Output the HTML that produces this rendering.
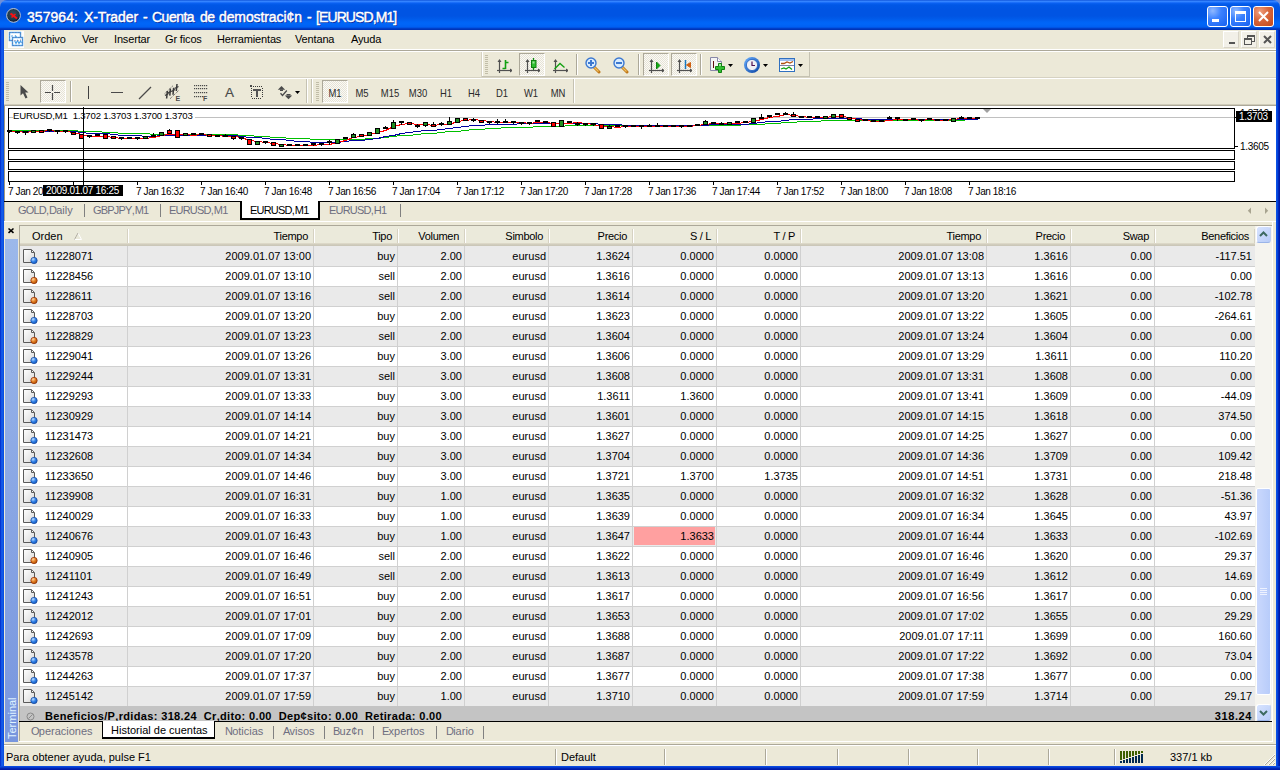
<!DOCTYPE html><html><head><meta charset="utf-8"><style>
*{margin:0;padding:0;box-sizing:border-box}
html,body{width:1280px;height:770px;overflow:hidden}
body{position:relative;background:#ECE9D8;font-family:"Liberation Sans",sans-serif;font-size:11px;color:#000}
.a{position:absolute}
.t{position:absolute;white-space:nowrap;line-height:13px}
.c{letter-spacing:-0.8px}
</style></head><body><div class="a" style="left:0;top:0;width:1280px;height:10px;background:#6F8FD8"></div><div class="a" style="left:0px;top:0px;width:1280px;height:30px;background:linear-gradient(to bottom,#0040D0 0px,#3A8CFF 1px,#2C7BFF 2px,#0A62F2 3px,#0057E6 5px,#0054E3 10px,#0054E3 16px,#005BEA 19px,#0064F6 22px,#0066F8 24px,#005FF2 27px,#004AD8 28px,#0034B8 29px,#0034B8 30px);border-radius:7px 7px 0 0"></div><div class="a" style="left:0px;top:30px;width:4px;height:740px;background:linear-gradient(to right,#0026C8,#0B44DC 1px,#1A66F0 2px,#0A4FE0 3px)"></div><div class="a" style="left:1276px;top:30px;width:4px;height:740px;background:linear-gradient(to right,#0A4FE0,#0A50E6 1px,#0039D0 2px,#001AA8 3px)"></div><div class="a" style="left:0px;top:766px;width:1280px;height:4px;background:linear-gradient(to bottom,#0A50E6,#0843DA 1px,#0030C0 2px,#001AA8 3px)"></div><svg class="a" style="left:6px;top:8px" width="15" height="15" viewBox="0 0 15 15">
<defs><radialGradient id="ic" cx="0.45" cy="0.4" r="0.6"><stop offset="0" stop-color="#3C5060"/><stop offset="0.7" stop-color="#1E3848"/><stop offset="1" stop-color="#0A1030"/></radialGradient></defs>
<circle cx="7.5" cy="7.4" r="6.9" fill="url(#ic)" stroke="#B8C4D8" stroke-width="1"/>
<path d="M4.5 5.5 L11 10.5" stroke="#FF1010" stroke-width="2"/><path d="M5.5 9.5 L9.5 6" stroke="#FF1010" stroke-width="1.5"/></svg><div class="t" style="left:27px;top:9px;font-size:14px;line-height:16px;color:#fff;-webkit-text-stroke:0.45px #fff;text-shadow:1px 1px 0 #0A2A9C;letter-spacing:0.05px">357964:</div><div class="t" style="left:84px;top:9px;font-size:14px;line-height:16px;color:#fff;-webkit-text-stroke:0.45px #fff;text-shadow:1px 1px 0 #0A2A9C;letter-spacing:-0.08px">X-Trader</div><div class="t" style="left:143px;top:9px;font-size:14px;line-height:16px;color:#fff;-webkit-text-stroke:0.45px #fff;text-shadow:1px 1px 0 #0A2A9C;letter-spacing:0px">-</div><div class="t" style="left:152px;top:9px;font-size:14px;line-height:16px;color:#fff;-webkit-text-stroke:0.45px #fff;text-shadow:1px 1px 0 #0A2A9C;letter-spacing:-0.5px">Cuenta</div><div class="t" style="left:200px;top:9px;font-size:14px;line-height:16px;color:#fff;-webkit-text-stroke:0.45px #fff;text-shadow:1px 1px 0 #0A2A9C;letter-spacing:-0.6px">de</div><div class="t" style="left:219px;top:9px;font-size:14px;line-height:16px;color:#fff;-webkit-text-stroke:0.45px #fff;text-shadow:1px 1px 0 #0A2A9C;letter-spacing:-0.1px">demostraci¢n</div><div class="t" style="left:307px;top:9px;font-size:14px;line-height:16px;color:#fff;-webkit-text-stroke:0.45px #fff;text-shadow:1px 1px 0 #0A2A9C;letter-spacing:0px">-</div><div class="t" style="left:316px;top:9px;font-size:14px;line-height:16px;color:#fff;-webkit-text-stroke:0.45px #fff;text-shadow:1px 1px 0 #0A2A9C;letter-spacing:-0.9px">[EURUSD,M1]</div><div class="a" style="left:1207px;top:6px;width:21px;height:21px;background:radial-gradient(circle at 25% 20%,#8FB8FF 0,#3C82FF 40%,#1660F0 100%);border:1px solid #fff;border-radius:3px"><div class="a" style="left:4px;top:12px;width:7px;height:3px;background:#fff"></div></div><div class="a" style="left:1230px;top:6px;width:21px;height:21px;background:radial-gradient(circle at 25% 20%,#8FB8FF 0,#3C82FF 40%,#1660F0 100%);border:1px solid #fff;border-radius:3px"><div class="a" style="left:4px;top:4px;width:11px;height:11px;border:1px solid #fff;border-top-width:3px"></div></div><div class="a" style="left:1253px;top:6px;width:21px;height:21px;background:radial-gradient(circle at 30% 25%,#F0A080 0,#D8663C 45%,#C24818 100%);border:1px solid #fff;border-radius:3px"><svg width="21" height="21" style="position:absolute;left:-1px;top:-1px"><path d="M6 6 L15 15 M15 6 L6 15" stroke="#fff" stroke-width="2"/></svg></div><svg class="a" style="left:8px;top:31px" width="16" height="17" viewBox="0 0 16 17">
<rect x="0" y="0" width="16" height="17" fill="#FCFCFC"/>
<rect x="1.5" y="1.5" width="11" height="8" fill="#fff" stroke="#48A0E8" stroke-width="1.4"/>
<path d="M3.5 5.5 L4.5 4.5 M7 4.5 L8.5 6" stroke="#48A0E8" stroke-width="1.2"/>
<rect x="4.5" y="6.5" width="10" height="8" fill="#fff" stroke="#48A0E8" stroke-width="1.4"/>
<path d="M6.5 9.5 L8 12.5 L9.5 9.5 L11 12.5 L12.5 10 L13.5 12" stroke="#48A0E8" stroke-width="1.1" fill="none"/>
<path d="M1.5 1.5 H12.5 V9.5 H1.5 Z M4.5 6.5 H14.5 V14.5 H4.5 Z" fill="none" stroke="#805070" stroke-width="1" stroke-dasharray="0.8 2.2" opacity="0.7"/></svg><div class="t" style="left:30px;top:33px;letter-spacing:-0.15px">Archivo</div><div class="t" style="left:82px;top:33px;letter-spacing:-0.15px">Ver</div><div class="t" style="left:114px;top:33px;letter-spacing:-0.15px">Insertar</div><div class="t" style="left:165px;top:33px;letter-spacing:-0.15px">Gr ficos</div><div class="t" style="left:217px;top:33px;letter-spacing:-0.15px">Herramientas</div><div class="t" style="left:295px;top:33px;letter-spacing:-0.15px">Ventana</div><div class="t" style="left:351px;top:33px;letter-spacing:-0.15px">Ayuda</div><div class="a" style="left:1223px;top:31px;width:16px;height:17px;background:#F2F0E8;border:1px solid #fff;border-right-color:#D8D4C8;border-bottom-color:#D8D4C8"><div class="a" style="left:5px;top:10px;width:6px;height:2px;background:#555"></div></div><div class="a" style="left:1241px;top:31px;width:16px;height:17px;background:#F2F0E8;border:1px solid #fff;border-right-color:#D8D4C8;border-bottom-color:#D8D4C8"><div class="a" style="left:5px;top:3px;width:8px;height:7px;border:1px solid #555;border-top-width:2px"></div><div class="a" style="left:2px;top:6px;width:8px;height:7px;border:1px solid #555;border-top-width:2px;background:#F2F0E8"></div></div><div class="a" style="left:1259px;top:31px;width:16px;height:17px;background:#F2F0E8;border:1px solid #fff;border-right-color:#D8D4C8;border-bottom-color:#D8D4C8"><svg width="16" height="17" style="position:absolute;left:0;top:0"><path d="M4 4 L11 11 M11 4 L4 11" stroke="#555" stroke-width="2"/></svg></div><div class="a" style="left:4px;top:49px;width:1272px;height:1px;background:#fff"></div><div class="a" style="left:4px;top:50px;width:1272px;height:1px;background:#ACA899"></div><div class="a" style="left:4px;top:51px;width:1272px;height:1px;background:#fff"></div><div class="a" style="left:4px;top:77px;width:1272px;height:1px;background:#D6D2C2"></div><div class="a" style="left:4px;top:78px;width:1272px;height:1px;background:#fff"></div><div class="a" style="left:4px;top:104px;width:1272px;height:1px;background:#D0CCBA"></div><div class="a" style="left:4px;top:105px;width:1272px;height:1px;background:#ACA899"></div><div class="a" style="left:481px;top:52px;width:1px;height:25px;background:#D6D2C2"></div><div class="a" style="left:482px;top:52px;width:1px;height:25px;background:#fff"></div><div class="a" style="left:482px;top:76px;width:328px;height:1px;background:#C5C2B2"></div><div class="a" style="left:809px;top:52px;width:1px;height:25px;background:#C5C2B2"></div><div class="a" style="left:485px;top:55px;width:3px;height:1px;background:#C1BDA8"></div><div class="a" style="left:485px;top:57px;width:3px;height:1px;background:#C1BDA8"></div><div class="a" style="left:485px;top:59px;width:3px;height:1px;background:#C1BDA8"></div><div class="a" style="left:485px;top:61px;width:3px;height:1px;background:#C1BDA8"></div><div class="a" style="left:485px;top:63px;width:3px;height:1px;background:#C1BDA8"></div><div class="a" style="left:485px;top:65px;width:3px;height:1px;background:#C1BDA8"></div><div class="a" style="left:485px;top:67px;width:3px;height:1px;background:#C1BDA8"></div><div class="a" style="left:485px;top:69px;width:3px;height:1px;background:#C1BDA8"></div><div class="a" style="left:485px;top:71px;width:3px;height:1px;background:#C1BDA8"></div><div class="a" style="left:485px;top:73px;width:3px;height:1px;background:#C1BDA8"></div><div class="a" style="left:6px;top:82px;width:3px;height:1px;background:#C1BDA8"></div><div class="a" style="left:6px;top:84px;width:3px;height:1px;background:#C1BDA8"></div><div class="a" style="left:6px;top:86px;width:3px;height:1px;background:#C1BDA8"></div><div class="a" style="left:6px;top:88px;width:3px;height:1px;background:#C1BDA8"></div><div class="a" style="left:6px;top:90px;width:3px;height:1px;background:#C1BDA8"></div><div class="a" style="left:6px;top:92px;width:3px;height:1px;background:#C1BDA8"></div><div class="a" style="left:6px;top:94px;width:3px;height:1px;background:#C1BDA8"></div><div class="a" style="left:6px;top:96px;width:3px;height:1px;background:#C1BDA8"></div><div class="a" style="left:6px;top:98px;width:3px;height:1px;background:#C1BDA8"></div><div class="a" style="left:6px;top:100px;width:3px;height:1px;background:#C1BDA8"></div><div class="a" style="left:306px;top:79px;width:1px;height:24px;background:#C5C2B2"></div><div class="a" style="left:307px;top:79px;width:1px;height:24px;background:#fff"></div><div class="a" style="left:311px;top:79px;width:1px;height:24px;background:#C5C2B2"></div><div class="a" style="left:312px;top:79px;width:1px;height:24px;background:#fff"></div><div class="a" style="left:316px;top:82px;width:3px;height:1px;background:#C1BDA8"></div><div class="a" style="left:316px;top:84px;width:3px;height:1px;background:#C1BDA8"></div><div class="a" style="left:316px;top:86px;width:3px;height:1px;background:#C1BDA8"></div><div class="a" style="left:316px;top:88px;width:3px;height:1px;background:#C1BDA8"></div><div class="a" style="left:316px;top:90px;width:3px;height:1px;background:#C1BDA8"></div><div class="a" style="left:316px;top:92px;width:3px;height:1px;background:#C1BDA8"></div><div class="a" style="left:316px;top:94px;width:3px;height:1px;background:#C1BDA8"></div><div class="a" style="left:316px;top:96px;width:3px;height:1px;background:#C1BDA8"></div><div class="a" style="left:316px;top:98px;width:3px;height:1px;background:#C1BDA8"></div><div class="a" style="left:316px;top:100px;width:3px;height:1px;background:#C1BDA8"></div><div class="a" style="left:573px;top:79px;width:1px;height:24px;background:#C5C2B2"></div><div class="a" style="left:574px;top:79px;width:1px;height:24px;background:#fff"></div><div class="a" style="left:70px;top:81px;width:1px;height:21px;background:#ACA899"></div><div class="a" style="left:71px;top:81px;width:1px;height:21px;background:#fff"></div><div class="a" style="left:576px;top:54px;width:1px;height:21px;background:#ACA899"></div><div class="a" style="left:577px;top:54px;width:1px;height:21px;background:#fff"></div><div class="a" style="left:638px;top:54px;width:1px;height:21px;background:#ACA899"></div><div class="a" style="left:639px;top:54px;width:1px;height:21px;background:#fff"></div><div class="a" style="left:700px;top:54px;width:1px;height:21px;background:#ACA899"></div><div class="a" style="left:701px;top:54px;width:1px;height:21px;background:#fff"></div><div class="a" style="left:40px;top:80px;width:26px;height:23px;background:repeating-conic-gradient(#FBFAF6 0 25%,#E6E3D6 0 50%) 0 0/2px 2px;border:1px solid #ACA899;border-right-color:#fff;border-bottom-color:#fff"></div><div class="a" style="left:519px;top:53px;width:26px;height:23px;background:repeating-conic-gradient(#FBFAF6 0 25%,#E6E3D6 0 50%) 0 0/2px 2px;border:1px solid #ACA899;border-right-color:#fff;border-bottom-color:#fff"></div><div class="a" style="left:643px;top:53px;width:26px;height:23px;background:repeating-conic-gradient(#FBFAF6 0 25%,#E6E3D6 0 50%) 0 0/2px 2px;border:1px solid #ACA899;border-right-color:#fff;border-bottom-color:#fff"></div><div class="a" style="left:671px;top:53px;width:26px;height:23px;background:repeating-conic-gradient(#FBFAF6 0 25%,#E6E3D6 0 50%) 0 0/2px 2px;border:1px solid #ACA899;border-right-color:#fff;border-bottom-color:#fff"></div><div class="a" style="left:322px;top:80px;width:26px;height:23px;background:repeating-conic-gradient(#FBFAF6 0 25%,#E6E3D6 0 50%) 0 0/2px 2px;border:1px solid #ACA899;border-right-color:#fff;border-bottom-color:#fff"></div><svg class="a" style="left:19px;top:84px" width="11" height="16" viewBox="0 0 11 16" ><path d="M1.5 1 L1.5 11.5 L4 9.2 L6.5 14.5 L8.5 13.5 L6.2 8.5 L9.5 8.5 Z" fill="#4A4A4A"/></svg><svg class="a" style="left:44px;top:84px" width="18" height="17" viewBox="0 0 18 17" ><path d="M8.5 1 V7 M8.5 9 V16 M1 8.5 H7 M10 8.5 H16" stroke="#4A4A4A" stroke-width="1.2"/></svg><div class="a" style="left:88px;top:86px;width:1px;height:13px;background:#404040"></div><div class="a" style="left:111px;top:91.5px;width:12px;height:1.6px;background:#4A4A4A"></div><svg class="a" style="left:138px;top:86px" width="14" height="14" viewBox="0 0 14 14" ><path d="M1 13 L13 1" stroke="#4A4A4A" stroke-width="1.3"/></svg><svg class="a" style="left:164px;top:83px" width="18" height="19" viewBox="0 0 18 19" ><path d="M0.7 10.6 L8.7 3" stroke="#4A4A4A" stroke-width="1" stroke-dasharray="1 1"/><path d="M6 15.8 L15 7.2" stroke="#4A4A4A" stroke-width="1" stroke-dasharray="1 1"/><path d="M3.4 8 L2.6 15.5 M6.4 5.6 L5.8 12.6 M9.6 4.8 L9 11.8 M13 1 L12.3 8" stroke="#3A3A3A" stroke-width="1.5"/><path d="M1 12.5 L4.5 10.5 M4 10 L7.5 8 M7.5 8.5 L11 6.5 M10.5 5.5 L14.5 3.5" stroke="#3A3A3A" stroke-width="1.2"/><text x="11.5" y="18" font-family="Liberation Sans" font-weight="bold" font-size="7" fill="#4A4A4A">E</text></svg><svg class="a" style="left:194px;top:84px" width="16" height="19" viewBox="0 0 16 19" ><rect x="0" y="1" width="1.2" height="1.2" fill="#4A4A4A"/><rect x="2" y="1" width="1.2" height="1.2" fill="#4A4A4A"/><rect x="4" y="1" width="1.2" height="1.2" fill="#4A4A4A"/><rect x="6" y="1" width="1.2" height="1.2" fill="#4A4A4A"/><rect x="8" y="1" width="1.2" height="1.2" fill="#4A4A4A"/><rect x="10" y="1" width="1.2" height="1.2" fill="#4A4A4A"/><rect x="12" y="1" width="1.2" height="1.2" fill="#4A4A4A"/><rect x="0" y="4" width="1.2" height="1.2" fill="#4A4A4A"/><rect x="2" y="4" width="1.2" height="1.2" fill="#4A4A4A"/><rect x="4" y="4" width="1.2" height="1.2" fill="#4A4A4A"/><rect x="6" y="4" width="1.2" height="1.2" fill="#4A4A4A"/><rect x="8" y="4" width="1.2" height="1.2" fill="#4A4A4A"/><rect x="10" y="4" width="1.2" height="1.2" fill="#4A4A4A"/><rect x="12" y="4" width="1.2" height="1.2" fill="#4A4A4A"/><rect x="0" y="8" width="1.2" height="1.2" fill="#4A4A4A"/><rect x="2" y="8" width="1.2" height="1.2" fill="#4A4A4A"/><rect x="4" y="8" width="1.2" height="1.2" fill="#4A4A4A"/><rect x="6" y="8" width="1.2" height="1.2" fill="#4A4A4A"/><rect x="8" y="8" width="1.2" height="1.2" fill="#4A4A4A"/><rect x="10" y="8" width="1.2" height="1.2" fill="#4A4A4A"/><rect x="12" y="8" width="1.2" height="1.2" fill="#4A4A4A"/><rect x="0" y="12" width="1.2" height="1.2" fill="#4A4A4A"/><rect x="2" y="12" width="1.2" height="1.2" fill="#4A4A4A"/><rect x="4" y="12" width="1.2" height="1.2" fill="#4A4A4A"/><rect x="6" y="12" width="1.2" height="1.2" fill="#4A4A4A"/><rect x="8" y="12" width="1.2" height="1.2" fill="#4A4A4A"/><text x="9" y="17" font-family="Liberation Sans" font-weight="bold" font-size="7" fill="#4A4A4A">F</text></svg><div class="t" style="left:225px;top:86px;font-size:13.5px;color:#4A4A4A;-webkit-text-stroke:0.15px #4A4A4A">A</div><svg class="a" style="left:250px;top:85px" width="14" height="15" viewBox="0 0 14 15" shape-rendering="crispEdges"><rect x="0" y="0" width="2" height="2" fill="#4A4A4A"/><rect x="3" y="1" width="1" height="1" fill="#3A3A3A"/><rect x="2" y="13" width="1" height="1" fill="#3A3A3A"/><rect x="5" y="1" width="1" height="1" fill="#3A3A3A"/><rect x="4" y="13" width="1" height="1" fill="#3A3A3A"/><rect x="7" y="1" width="1" height="1" fill="#3A3A3A"/><rect x="6" y="13" width="1" height="1" fill="#3A3A3A"/><rect x="9" y="1" width="1" height="1" fill="#3A3A3A"/><rect x="8" y="13" width="1" height="1" fill="#3A3A3A"/><rect x="11" y="1" width="1" height="1" fill="#3A3A3A"/><rect x="10" y="13" width="1" height="1" fill="#3A3A3A"/><rect x="1" y="3" width="1" height="1" fill="#3A3A3A"/><rect x="12" y="3" width="1" height="1" fill="#3A3A3A"/><rect x="1" y="5" width="1" height="1" fill="#3A3A3A"/><rect x="12" y="5" width="1" height="1" fill="#3A3A3A"/><rect x="1" y="7" width="1" height="1" fill="#3A3A3A"/><rect x="12" y="7" width="1" height="1" fill="#3A3A3A"/><rect x="1" y="9" width="1" height="1" fill="#3A3A3A"/><rect x="12" y="9" width="1" height="1" fill="#3A3A3A"/><rect x="1" y="11" width="1" height="1" fill="#3A3A3A"/><rect x="12" y="11" width="1" height="1" fill="#3A3A3A"/><rect x="3" y="4" width="8" height="1.5" fill="#555"/><rect x="6.2" y="4" width="1.7" height="8" fill="#555"/></svg><svg class="a" style="left:277px;top:85px" width="24" height="15" viewBox="0 0 24 15" ><path d="M0.8 4.8 L4.5 1 L8.2 4.8 Z" fill="#4A4A4A"/><rect x="3" y="4.5" width="3" height="1.5" fill="#4A4A4A"/><path d="M3.5 8.3 L5.5 10.5 L9.8 5.5" stroke="#4A4A4A" stroke-width="1.3" fill="none"/><rect x="9.5" y="9" width="4" height="1.5" fill="#4A4A4A"/><path d="M7.8 10.5 L15.2 10.5 L11.5 14.2 Z" fill="#4A4A4A"/><path d="M18 6 H23 L20.5 9 Z" fill="#000"/></svg><div class="t" style="left:314.5px;width:40px;text-align:center;top:87px;font-size:11px;color:#2A2A2A;transform:scaleX(0.86)">M1</div><div class="t" style="left:341.7px;width:40px;text-align:center;top:87px;font-size:11px;color:#2A2A2A;transform:scaleX(0.86)">M5</div><div class="t" style="left:370.4px;width:40px;text-align:center;top:87px;font-size:11px;color:#2A2A2A;transform:scaleX(0.86)">M15</div><div class="t" style="left:398.3px;width:40px;text-align:center;top:87px;font-size:11px;color:#2A2A2A;transform:scaleX(0.86)">M30</div><div class="t" style="left:426.4px;width:40px;text-align:center;top:87px;font-size:11px;color:#2A2A2A;transform:scaleX(0.86)">H1</div><div class="t" style="left:453.7px;width:40px;text-align:center;top:87px;font-size:11px;color:#2A2A2A;transform:scaleX(0.86)">H4</div><div class="t" style="left:482.4px;width:40px;text-align:center;top:87px;font-size:11px;color:#2A2A2A;transform:scaleX(0.86)">D1</div><div class="t" style="left:511.4px;width:40px;text-align:center;top:87px;font-size:11px;color:#2A2A2A;transform:scaleX(0.86)">W1</div><div class="t" style="left:537.9px;width:40px;text-align:center;top:87px;font-size:11px;color:#2A2A2A;transform:scaleX(0.86)">MN</div><svg class="a" style="left:494px;top:57px" width="18" height="17" viewBox="0 0 18 17" ><path d="M5.5 3 V16" stroke="#505050" stroke-width="1.2"/><path d="M3 13.5 H17" stroke="#505050" stroke-width="1.2"/><path d="M3.5 5 L5.5 2 L7.5 5 Z" fill="#505050"/><path d="M16 11.5 L19 13.5 L16 15.5 Z" fill="#505050"/><path d="M11.5 3 V12 M11.5 5.5 H14.5 M8.5 11.5 H11.5" stroke="#10A010" stroke-width="1.6" fill="none"/></svg><svg class="a" style="left:522px;top:55px" width="18" height="19" viewBox="0 0 18 19" ><path d="M5.5 5 V18" stroke="#505050" stroke-width="1.2"/><path d="M3 15.5 H17" stroke="#505050" stroke-width="1.2"/><path d="M3.5 7 L5.5 4 L7.5 7 Z" fill="#505050"/><path d="M16 13.5 L19 15.5 L16 17.5 Z" fill="#505050"/><path d="M11.5 3 V15" stroke="#109010" stroke-width="1.3"/><rect x="9.5" y="5.5" width="4.5" height="7" fill="#30C030" stroke="#108010"/><rect x="10.5" y="6.5" width="2" height="2" fill="#A0E0A0"/></svg><svg class="a" style="left:550px;top:57px" width="18" height="17" viewBox="0 0 18 17" ><path d="M5.5 3 V16" stroke="#505050" stroke-width="1.2"/><path d="M3 13.5 H17" stroke="#505050" stroke-width="1.2"/><path d="M3.5 5 L5.5 2 L7.5 5 Z" fill="#505050"/><path d="M16 11.5 L19 13.5 L16 15.5 Z" fill="#505050"/><path d="M4.5 12 L10 6.5 L14.5 10.5" stroke="#10A010" stroke-width="1.3" fill="none"/></svg><div class="a" style="left:576px;top:55px;width:1px;height:19px;background:#ACA899"></div><div class="a" style="left:577px;top:55px;width:1px;height:19px;background:#fff"></div><svg class="a" style="left:585px;top:57px" width="16" height="17" viewBox="0 0 16 17" ><path d="M8 9 L14 15" stroke="#C07818" stroke-width="3" stroke-linecap="round"/><path d="M8.5 9.5 L13.5 14.5" stroke="#F0C060" stroke-width="1.2"/><circle cx="6" cy="6" r="5" fill="#D8ECFF" stroke="#3C78D0" stroke-width="1.4"/><path d="M3 6 H9 M6 3 V9" stroke="#3C78D0" stroke-width="2"/></svg><svg class="a" style="left:613px;top:57px" width="16" height="17" viewBox="0 0 16 17" ><path d="M8 9 L14 15" stroke="#C07818" stroke-width="3" stroke-linecap="round"/><path d="M8.5 9.5 L13.5 14.5" stroke="#F0C060" stroke-width="1.2"/><circle cx="6" cy="6" r="5" fill="#D8ECFF" stroke="#3C78D0" stroke-width="1.4"/><path d="M3 6 H9" stroke="#3C78D0" stroke-width="2"/></svg><div class="a" style="left:638px;top:55px;width:1px;height:19px;background:#ACA899"></div><div class="a" style="left:639px;top:55px;width:1px;height:19px;background:#fff"></div><svg class="a" style="left:646px;top:57px" width="18" height="17" viewBox="0 0 18 17" ><path d="M5.5 3 V16" stroke="#505050" stroke-width="1.2"/><path d="M3 13.5 H17" stroke="#505050" stroke-width="1.2"/><path d="M3.5 5 L5.5 2 L7.5 5 Z" fill="#505050"/><path d="M16 11.5 L19 13.5 L16 15.5 Z" fill="#505050"/><path d="M10.5 5 L14 8.5 L10.5 12 Z" fill="#10B010" stroke="#108010"/></svg><svg class="a" style="left:674px;top:57px" width="18" height="17" viewBox="0 0 18 17" ><path d="M5.5 3 V16" stroke="#505050" stroke-width="1.2"/><path d="M3 13.5 H17" stroke="#505050" stroke-width="1.2"/><path d="M3.5 5 L5.5 2 L7.5 5 Z" fill="#505050"/><path d="M16 11.5 L19 13.5 L16 15.5 Z" fill="#505050"/><path d="M11.5 3 V12" stroke="#1878C0" stroke-width="1.5"/><path d="M12.5 8 L16.5 5.5 V10.5 Z M14 7.5 H17" fill="#D06010" stroke="#D06010"/></svg><div class="a" style="left:700px;top:55px;width:1px;height:19px;background:#ACA899"></div><div class="a" style="left:701px;top:55px;width:1px;height:19px;background:#fff"></div><svg class="a" style="left:709px;top:56px" width="26" height="21" viewBox="0 0 26 21" ><path d="M1.5 1.5 H8.5 L12.5 5.5 V14.5 H1.5 Z" fill="#F4F4F4" stroke="#8888A8"/><path d="M8.5 1.5 V5.5 H12.5" fill="#fff" stroke="#8888A8"/><path d="M4.5 5 V12" stroke="#601010"/><path d="M9.5 7.5 H12.5 V10.5 H15.5 V13.5 H12.5 V16.5 H9.5 V13.5 H6.5 V10.5 H9.5 Z" fill="#30C030" stroke="#108010"/><rect x="10" y="8" width="2" height="2" fill="#A0E8A0"/><path d="M19 8 H24 L21.5 11 Z" fill="#000"/></svg><svg class="a" style="left:743px;top:56px" width="27" height="18" viewBox="0 0 27 18" ><defs><linearGradient id="clk" x1="0" y1="0" x2="1" y2="1"><stop offset="0" stop-color="#6AB0FF"/><stop offset="1" stop-color="#0840A0"/></linearGradient></defs><circle cx="9" cy="9" r="8" fill="url(#clk)"/><circle cx="9" cy="9" r="5.6" fill="#F0F0F4" stroke="#2060C0" stroke-width="0.8"/><path d="M9 5.5 V9.5 H12" stroke="#501050" stroke-width="1.2" fill="none"/><path d="M20 8 H25 L22.5 11 Z" fill="#000"/></svg><svg class="a" style="left:778px;top:57px" width="27" height="16" viewBox="0 0 27 16" ><rect x="1.5" y="1.5" width="15" height="13" fill="#fff" stroke="#3070C0"/><rect x="2" y="2" width="14" height="2" fill="#A0C0F0"/><path d="M2 8.5 H16" stroke="#8080A0"/><path d="M3 6.5 L6 6.5 L9 5 L12 6 L15 4.5" stroke="#B05010" stroke-width="1.3" fill="none"/><path d="M3 12 L6 11 L8 12 L11 10 L14 12.5" stroke="#10A010" stroke-width="1.3" fill="none"/><path d="M20 7 H25 L22.5 10 Z" fill="#000"/></svg><div class="a" style="left:4px;top:106px;width:1272px;height:95px;background:#fff;border-left:1px solid #A09A80"></div><div class="a" style="left:4px;top:201px;width:1272px;height:1px;background:#000"></div><svg class="a" style="left:0;top:0" width="1280" height="202" shape-rendering="crispEdges"><rect x="9" y="117" width="1225" height="1" fill="#C0C0C0"/><rect x="8.5" y="108.5" width="1226" height="40" fill="none" stroke="#000"/><rect x="8.5" y="150.5" width="1226" height="9" fill="none" stroke="#000"/><rect x="8.5" y="161.5" width="1226" height="8" fill="none" stroke="#000"/><rect x="8.5" y="171.5" width="1226" height="10" fill="none" stroke="#000"/><polyline points="9.5,130.5 17.5,130.5 25.5,130.5 33.5,130.5 41.5,130.5 49.5,130.5 57.5,130.5 65.5,130.5 73.5,130.5 81.5,131.5 89.5,131.5 97.5,131.5 105.5,132.5 113.5,132.5 121.5,133.5 129.5,133.5 137.5,133.5 145.5,133.5 153.5,134.5 161.5,134.5 169.5,134.5 177.5,134.5 185.5,134.5 193.5,134.5 201.5,134.5 209.5,134.5 217.5,134.5 225.5,134.5 233.5,134.5 241.5,135.5 249.5,135.5 257.5,136.5 265.5,136.5 273.5,137.5 281.5,137.5 289.5,138.5 297.5,138.5 305.5,138.5 313.5,139.5 321.5,139.5 329.5,139.5 337.5,139.5 345.5,139.5 353.5,139.5 361.5,139.5 369.5,138.5 377.5,138.5 385.5,137.5 393.5,136.5 401.5,135.5 409.5,135.5 417.5,134.5 425.5,133.5 433.5,133.5 441.5,132.5 449.5,131.5 457.5,131.5 465.5,130.5 473.5,129.5 481.5,129.5 489.5,128.5 497.5,128.5 505.5,127.5 513.5,127.5 521.5,127.5 529.5,127.5 537.5,126.5 545.5,126.5 553.5,126.5 561.5,126.5 569.5,125.5 577.5,125.5 585.5,125.5 593.5,125.5 601.5,125.5 609.5,125.5 617.5,125.5 625.5,125.5 633.5,125.5 641.5,126.5 649.5,126.5 657.5,126.5 665.5,126.5 673.5,126.5 681.5,126.5 689.5,126.5 697.5,125.5 705.5,125.5 713.5,125.5 721.5,125.5 729.5,125.5 737.5,125.5 745.5,124.5 753.5,124.5 761.5,124.5 769.5,123.5 777.5,123.5 785.5,122.5 793.5,122.5 801.5,121.5 809.5,121.5 817.5,121.5 825.5,120.5 833.5,120.5 841.5,120.5 849.5,120.5 857.5,120.5 865.5,120.5 873.5,120.5 881.5,120.5 889.5,120.5 897.5,120.5 905.5,120.5 913.5,120.5 921.5,120.5 929.5,120.5 937.5,120.5 945.5,120.5 953.5,120.5 961.5,120.5 969.5,119.5 977.5,119.5" fill="none" stroke="#00C000" stroke-width="1" shape-rendering="crispEdges"/><polyline points="9.5,131.5 17.5,131.5 25.5,131.5 33.5,131.5 41.5,131.5 49.5,131.5 57.5,131.5 65.5,131.5 73.5,131.5 81.5,132.5 89.5,133.5 97.5,133.5 105.5,133.5 113.5,134.5 121.5,135.5 129.5,135.5 137.5,135.5 145.5,136.5 153.5,136.5 161.5,135.5 169.5,135.5 177.5,135.5 185.5,135.5 193.5,135.5 201.5,135.5 209.5,135.5 217.5,135.5 225.5,135.5 233.5,135.5 241.5,136.5 249.5,137.5 257.5,137.5 265.5,138.5 273.5,139.5 281.5,139.5 289.5,140.5 297.5,141.5 305.5,141.5 313.5,142.5 321.5,142.5 329.5,142.5 337.5,142.5 345.5,141.5 353.5,140.5 361.5,140.5 369.5,139.5 377.5,138.5 385.5,136.5 393.5,135.5 401.5,133.5 409.5,132.5 417.5,131.5 425.5,130.5 433.5,130.5 441.5,129.5 449.5,128.5 457.5,127.5 465.5,126.5 473.5,125.5 481.5,125.5 489.5,124.5 497.5,124.5 505.5,124.5 513.5,124.5 521.5,123.5 529.5,123.5 537.5,123.5 545.5,123.5 553.5,123.5 561.5,123.5 569.5,123.5 577.5,123.5 585.5,123.5 593.5,123.5 601.5,124.5 609.5,124.5 617.5,124.5 625.5,125.5 633.5,125.5 641.5,125.5 649.5,125.5 657.5,125.5 665.5,125.5 673.5,125.5 681.5,125.5 689.5,125.5 697.5,125.5 705.5,125.5 713.5,124.5 721.5,124.5 729.5,124.5 737.5,124.5 745.5,124.5 753.5,123.5 761.5,122.5 769.5,121.5 777.5,121.5 785.5,120.5 793.5,119.5 801.5,119.5 809.5,119.5 817.5,118.5 825.5,118.5 833.5,118.5 841.5,118.5 849.5,118.5 857.5,118.5 865.5,119.5 873.5,119.5 881.5,119.5 889.5,119.5 897.5,119.5 905.5,119.5 913.5,119.5 921.5,119.5 929.5,119.5 937.5,119.5 945.5,119.5 953.5,119.5 961.5,119.5 969.5,119.5 977.5,119.5" fill="none" stroke="#0000A0" stroke-width="1" shape-rendering="crispEdges"/><polyline points="9.5,131.5 17.5,131.5 25.5,132.5 33.5,131.5 41.5,131.5 49.5,130.5 57.5,131.5 65.5,131.5 73.5,132.5 81.5,134.5 89.5,136.5 97.5,136.5 105.5,136.5 113.5,137.5 121.5,138.5 129.5,138.5 137.5,138.5 145.5,138.5 153.5,137.5 161.5,135.5 169.5,134.5 177.5,134.5 185.5,134.5 193.5,135.5 201.5,134.5 209.5,135.5 217.5,135.5 225.5,136.5 233.5,136.5 241.5,137.5 249.5,140.5 257.5,141.5 265.5,142.5 273.5,143.5 281.5,144.5 289.5,145.5 297.5,145.5 305.5,145.5 313.5,145.5 321.5,144.5 329.5,144.5 337.5,142.5 345.5,140.5 353.5,137.5 361.5,136.5 369.5,134.5 377.5,132.5 385.5,130.5 393.5,126.5 401.5,124.5 409.5,123.5 417.5,124.5 425.5,124.5 433.5,125.5 441.5,124.5 449.5,124.5 457.5,121.5 465.5,120.5 473.5,119.5 481.5,120.5 489.5,121.5 497.5,122.5 505.5,122.5 513.5,122.5 521.5,122.5 529.5,123.5 537.5,122.5 545.5,122.5 553.5,123.5 561.5,123.5 569.5,123.5 577.5,122.5 585.5,123.5 593.5,124.5 601.5,126.5 609.5,126.5 617.5,127.5 625.5,126.5 633.5,126.5 641.5,126.5 649.5,126.5 657.5,126.5 665.5,126.5 673.5,126.5 681.5,126.5 689.5,126.5 697.5,125.5 705.5,124.5 713.5,123.5 721.5,123.5 729.5,123.5 737.5,123.5 745.5,122.5 753.5,121.5 761.5,119.5 769.5,117.5 777.5,116.5 785.5,114.5 793.5,115.5 801.5,116.5 809.5,117.5 817.5,117.5 825.5,117.5 833.5,116.5 841.5,116.5 849.5,117.5 857.5,119.5 865.5,120.5 873.5,121.5 881.5,121.5 889.5,120.5 897.5,119.5 905.5,119.5 913.5,119.5 921.5,120.5 929.5,119.5 937.5,120.5 945.5,120.5 953.5,119.5 961.5,118.5 969.5,118.5 977.5,118.5" fill="none" stroke="#FF0000" stroke-width="1" shape-rendering="crispEdges"/><rect x="9" y="130" width="1" height="1" fill="#000"/><rect x="9" y="131" width="1" height="2" fill="#000"/><rect x="7" y="130" width="5" height="2" fill="#000"/><rect x="17" y="132" width="1" height="2" fill="#000"/><rect x="15" y="131" width="5" height="2" fill="#000"/><rect x="25" y="132" width="1" height="3" fill="#000"/><rect x="23" y="131" width="5" height="2" fill="#000"/><rect x="31.0" y="130.5" width="4" height="2" fill="#209020" stroke="#000"/><rect x="39.0" y="130.5" width="4" height="2" fill="#FF0000" stroke="#000"/><rect x="49" y="129" width="1" height="1" fill="#000"/><rect x="49" y="130" width="1" height="2" fill="#000"/><rect x="47" y="129" width="5" height="2" fill="#000"/><rect x="57" y="131" width="1" height="3" fill="#000"/><rect x="55" y="130" width="5" height="2" fill="#000"/><rect x="65" y="130" width="1" height="1" fill="#000"/><rect x="65" y="131" width="1" height="2" fill="#000"/><rect x="63" y="130" width="5" height="2" fill="#000"/><rect x="71.0" y="132.5" width="4" height="2" fill="#FF0000" stroke="#000"/><rect x="79.0" y="134.5" width="4" height="4" fill="#FF0000" stroke="#000"/><rect x="89" y="135" width="1" height="1" fill="#000"/><rect x="89" y="136" width="1" height="2" fill="#000"/><rect x="87" y="135" width="5" height="2" fill="#000"/><rect x="97" y="134" width="1" height="1" fill="#000"/><rect x="97" y="135" width="1" height="1" fill="#000"/><rect x="95" y="134" width="5" height="2" fill="#000"/><rect x="103.0" y="134.5" width="4" height="4" fill="#FF0000" stroke="#000"/><rect x="111.0" y="136.5" width="4" height="2" fill="#FF0000" stroke="#000"/><rect x="121" y="138" width="1" height="2" fill="#000"/><rect x="119" y="137" width="5" height="2" fill="#000"/><rect x="127" y="137" width="5" height="2" fill="#000"/><rect x="137" y="138" width="1" height="2" fill="#000"/><rect x="135" y="137" width="5" height="2" fill="#000"/><rect x="143.0" y="136.5" width="4" height="2" fill="#209020" stroke="#000"/><rect x="153" y="133" width="1" height="3" fill="#000"/><rect x="151" y="135" width="5" height="2" fill="#000"/><rect x="159.0" y="132.5" width="4" height="3" fill="#209020" stroke="#000"/><rect x="169" y="129" width="1" height="1" fill="#000"/><rect x="167.0" y="130.5" width="4" height="3" fill="#FF0000" stroke="#000"/><rect x="175.0" y="130.5" width="4" height="7" fill="#FF0000" stroke="#000"/><rect x="183.0" y="133.5" width="4" height="2" fill="#209020" stroke="#000"/><rect x="191" y="133" width="5" height="2" fill="#000"/><rect x="199" y="133" width="5" height="2" fill="#000"/><rect x="207.0" y="134.5" width="4" height="2" fill="#FF0000" stroke="#000"/><rect x="215" y="135" width="5" height="2" fill="#000"/><rect x="225" y="134" width="1" height="2" fill="#000"/><rect x="223" y="135" width="5" height="2" fill="#000"/><rect x="233" y="138" width="1" height="2" fill="#000"/><rect x="231.0" y="136.5" width="4" height="2" fill="#FF0000" stroke="#000"/><rect x="241" y="138" width="1" height="2" fill="#000"/><rect x="239" y="137" width="5" height="2" fill="#000"/><rect x="249" y="144" width="1" height="1" fill="#000"/><rect x="247.0" y="139.5" width="4" height="5" fill="#FF0000" stroke="#000"/><rect x="255.0" y="141.5" width="4" height="3" fill="#209020" stroke="#000"/><rect x="265" y="142" width="1" height="2" fill="#000"/><rect x="263" y="141" width="5" height="2" fill="#000"/><rect x="273" y="142" width="1" height="1" fill="#000"/><rect x="271.0" y="142.5" width="4" height="3" fill="#FF0000" stroke="#000"/><rect x="279.0" y="144.5" width="4" height="2" fill="#209020" stroke="#000"/><rect x="289" y="144" width="1" height="1" fill="#000"/><rect x="289" y="145" width="1" height="1" fill="#000"/><rect x="287" y="144" width="5" height="2" fill="#000"/><rect x="297" y="145" width="1" height="1" fill="#000"/><rect x="295" y="144" width="5" height="2" fill="#000"/><rect x="305" y="145" width="1" height="1" fill="#000"/><rect x="303" y="144" width="5" height="2" fill="#000"/><rect x="313" y="143" width="1" height="1" fill="#000"/><rect x="313" y="144" width="1" height="2" fill="#000"/><rect x="311" y="143" width="5" height="2" fill="#000"/><rect x="321" y="144" width="1" height="2" fill="#000"/><rect x="319" y="143" width="5" height="2" fill="#000"/><rect x="329" y="140" width="1" height="2" fill="#000"/><rect x="329" y="142" width="1" height="3" fill="#000"/><rect x="327" y="141" width="5" height="2" fill="#000"/><rect x="335.0" y="139.5" width="4" height="4" fill="#209020" stroke="#000"/><rect x="343" y="137" width="5" height="2" fill="#000"/><rect x="353" y="133" width="1" height="1" fill="#000"/><rect x="351.0" y="134.5" width="4" height="3" fill="#209020" stroke="#000"/><rect x="359.0" y="134.5" width="4" height="2" fill="#FF0000" stroke="#000"/><rect x="369" y="135" width="1" height="1" fill="#000"/><rect x="367.0" y="132.5" width="4" height="3" fill="#209020" stroke="#000"/><rect x="375.0" y="128.5" width="4" height="5" fill="#209020" stroke="#000"/><rect x="385" y="126" width="1" height="2" fill="#000"/><rect x="383" y="127" width="5" height="2" fill="#000"/><rect x="393" y="120" width="1" height="2" fill="#000"/><rect x="391.0" y="122.5" width="4" height="6" fill="#209020" stroke="#000"/><rect x="401" y="122" width="1" height="3" fill="#000"/><rect x="399" y="121" width="5" height="2" fill="#000"/><rect x="407.0" y="122.5" width="4" height="2" fill="#FF0000" stroke="#000"/><rect x="417" y="124" width="1" height="2" fill="#000"/><rect x="417" y="126" width="1" height="2" fill="#000"/><rect x="415" y="125" width="5" height="2" fill="#000"/><rect x="425" y="125" width="1" height="2" fill="#000"/><rect x="423.0" y="122.5" width="4" height="3" fill="#209020" stroke="#000"/><rect x="433" y="122" width="1" height="2" fill="#000"/><rect x="431.0" y="124.5" width="4" height="2" fill="#FF0000" stroke="#000"/><rect x="441" y="122" width="1" height="2" fill="#000"/><rect x="441" y="124" width="1" height="2" fill="#000"/><rect x="439" y="123" width="5" height="2" fill="#000"/><rect x="449" y="117" width="1" height="4" fill="#000"/><rect x="447.0" y="121.5" width="4" height="3" fill="#209020" stroke="#000"/><rect x="455.0" y="118.5" width="4" height="4" fill="#209020" stroke="#000"/><rect x="463.0" y="118.5" width="4" height="2" fill="#FF0000" stroke="#000"/><rect x="473" y="118" width="1" height="2" fill="#000"/><rect x="473" y="120" width="1" height="2" fill="#000"/><rect x="471" y="119" width="5" height="2" fill="#000"/><rect x="479.0" y="120.5" width="4" height="2" fill="#FF0000" stroke="#000"/><rect x="489" y="121" width="1" height="1" fill="#000"/><rect x="489" y="122" width="1" height="2" fill="#000"/><rect x="487" y="121" width="5" height="2" fill="#000"/><rect x="497" y="119" width="1" height="3" fill="#000"/><rect x="497" y="122" width="1" height="2" fill="#000"/><rect x="495" y="121" width="5" height="2" fill="#000"/><rect x="505" y="119" width="1" height="3" fill="#000"/><rect x="503" y="121" width="5" height="2" fill="#000"/><rect x="513" y="122" width="1" height="1" fill="#000"/><rect x="513" y="122" width="1" height="2" fill="#000"/><rect x="511" y="121" width="5" height="2" fill="#000"/><rect x="521" y="123" width="1" height="2" fill="#000"/><rect x="519" y="122" width="5" height="2" fill="#000"/><rect x="529" y="123" width="1" height="2" fill="#000"/><rect x="527" y="122" width="5" height="2" fill="#000"/><rect x="535" y="120" width="5" height="2" fill="#000"/><rect x="543" y="121" width="5" height="2" fill="#000"/><rect x="551.0" y="122.5" width="4" height="4" fill="#FF0000" stroke="#000"/><rect x="559.0" y="120.5" width="4" height="6" fill="#209020" stroke="#000"/><rect x="567" y="121" width="5" height="2" fill="#000"/><rect x="577" y="122" width="1" height="2" fill="#000"/><rect x="577" y="124" width="1" height="2" fill="#000"/><rect x="575" y="123" width="5" height="2" fill="#000"/><rect x="585" y="124" width="1" height="2" fill="#000"/><rect x="583" y="123" width="5" height="2" fill="#000"/><rect x="593" y="124" width="1" height="2" fill="#000"/><rect x="591" y="123" width="5" height="2" fill="#000"/><rect x="599.0" y="124.5" width="4" height="4" fill="#FF0000" stroke="#000"/><rect x="609" y="125" width="1" height="1" fill="#000"/><rect x="607.0" y="126.5" width="4" height="2" fill="#209020" stroke="#000"/><rect x="615" y="125" width="5" height="2" fill="#000"/><rect x="625" y="126" width="1" height="2" fill="#000"/><rect x="623" y="125" width="5" height="2" fill="#000"/><rect x="631" y="125" width="5" height="2" fill="#000"/><rect x="641" y="126" width="1" height="3" fill="#000"/><rect x="639" y="125" width="5" height="2" fill="#000"/><rect x="649" y="124" width="1" height="2" fill="#000"/><rect x="647" y="125" width="5" height="2" fill="#000"/><rect x="657" y="123" width="1" height="3" fill="#000"/><rect x="655" y="125" width="5" height="2" fill="#000"/><rect x="663" y="125" width="5" height="2" fill="#000"/><rect x="671" y="125" width="5" height="2" fill="#000"/><rect x="681" y="126" width="1" height="2" fill="#000"/><rect x="679" y="125" width="5" height="2" fill="#000"/><rect x="687" y="125" width="5" height="2" fill="#000"/><rect x="697" y="125" width="1" height="1" fill="#000"/><rect x="695" y="124" width="5" height="2" fill="#000"/><rect x="705" y="120" width="1" height="1" fill="#000"/><rect x="703.0" y="121.5" width="4" height="3" fill="#209020" stroke="#000"/><rect x="713" y="122" width="1" height="1" fill="#000"/><rect x="711" y="122" width="5" height="2" fill="#000"/><rect x="721" y="122" width="1" height="2" fill="#000"/><rect x="719" y="123" width="5" height="2" fill="#000"/><rect x="727.0" y="122.5" width="4" height="2" fill="#209020" stroke="#000"/><rect x="735" y="121" width="5" height="2" fill="#000"/><rect x="743" y="121" width="5" height="2" fill="#000"/><rect x="751.0" y="118.5" width="4" height="4" fill="#209020" stroke="#000"/><rect x="761" y="114" width="1" height="4" fill="#000"/><rect x="759" y="117" width="5" height="2" fill="#000"/><rect x="769" y="115" width="1" height="1" fill="#000"/><rect x="769" y="116" width="1" height="2" fill="#000"/><rect x="767" y="115" width="5" height="2" fill="#000"/><rect x="777" y="114" width="1" height="1" fill="#000"/><rect x="775" y="113" width="5" height="2" fill="#000"/><rect x="785" y="112" width="1" height="2" fill="#000"/><rect x="783" y="113" width="5" height="2" fill="#000"/><rect x="793" y="112" width="1" height="2" fill="#000"/><rect x="791.0" y="114.5" width="4" height="2" fill="#FF0000" stroke="#000"/><rect x="799" y="116" width="5" height="2" fill="#000"/><rect x="807" y="116" width="5" height="2" fill="#000"/><rect x="815" y="116" width="5" height="2" fill="#000"/><rect x="823.0" y="116.5" width="4" height="2" fill="#209020" stroke="#000"/><rect x="831.0" y="114.5" width="4" height="3" fill="#209020" stroke="#000"/><rect x="839.0" y="114.5" width="4" height="3" fill="#FF0000" stroke="#000"/><rect x="847.0" y="117.5" width="4" height="2" fill="#FF0000" stroke="#000"/><rect x="855.0" y="119.5" width="4" height="2" fill="#FF0000" stroke="#000"/><rect x="863" y="119" width="5" height="2" fill="#000"/><rect x="873" y="121" width="1" height="1" fill="#000"/><rect x="871" y="120" width="5" height="2" fill="#000"/><rect x="879" y="120" width="5" height="2" fill="#000"/><rect x="889" y="116" width="1" height="2" fill="#000"/><rect x="887" y="117" width="5" height="2" fill="#000"/><rect x="897" y="118" width="1" height="3" fill="#000"/><rect x="895" y="117" width="5" height="2" fill="#000"/><rect x="905" y="120" width="1" height="1" fill="#000"/><rect x="903" y="119" width="5" height="2" fill="#000"/><rect x="913" y="118" width="1" height="1" fill="#000"/><rect x="911" y="118" width="5" height="2" fill="#000"/><rect x="921" y="120" width="1" height="2" fill="#000"/><rect x="919" y="119" width="5" height="2" fill="#000"/><rect x="929" y="118" width="1" height="1" fill="#000"/><rect x="927" y="118" width="5" height="2" fill="#000"/><rect x="935" y="119" width="5" height="2" fill="#000"/><rect x="943" y="119" width="5" height="2" fill="#000"/><rect x="951.0" y="118.5" width="4" height="3" fill="#209020" stroke="#000"/><rect x="961" y="116" width="1" height="2" fill="#000"/><rect x="959" y="117" width="5" height="2" fill="#000"/><rect x="967" y="117" width="5" height="2" fill="#000"/><rect x="975" y="117" width="5" height="2" fill="#000"/><path d="M983 109 H991 L987 113 Z" fill="#A0A0A0" shape-rendering="auto"/><rect x="9" y="182" width="1" height="3" fill="#000"/><rect x="73" y="182" width="1" height="3" fill="#000"/><rect x="137" y="182" width="1" height="3" fill="#000"/><rect x="201" y="182" width="1" height="3" fill="#000"/><rect x="265" y="182" width="1" height="3" fill="#000"/><rect x="329" y="182" width="1" height="3" fill="#000"/><rect x="393" y="182" width="1" height="3" fill="#000"/><rect x="457" y="182" width="1" height="3" fill="#000"/><rect x="521" y="182" width="1" height="3" fill="#000"/><rect x="585" y="182" width="1" height="3" fill="#000"/><rect x="649" y="182" width="1" height="3" fill="#000"/><rect x="713" y="182" width="1" height="3" fill="#000"/><rect x="777" y="182" width="1" height="3" fill="#000"/><rect x="841" y="182" width="1" height="3" fill="#000"/><rect x="905" y="182" width="1" height="3" fill="#000"/><rect x="969" y="182" width="1" height="3" fill="#000"/><rect x="1235" y="117" width="3" height="1" fill="#000"/><rect x="1235" y="146" width="3" height="1" fill="#000"/></svg><div class="t" style="left:13px;top:109px;font-size:9.6px;background:#fff;letter-spacing:-0.2px;padding-right:2px">EURUSD,M1&nbsp; 1.3702 1.3703 1.3700 1.3703</div><div class="t" style="left:8px;top:185px;font-size:10px;letter-spacing:-0.4px">7 Jan 2009</div><div class="t" style="left:136px;top:185px;font-size:10px;letter-spacing:-0.4px">7 Jan 16:32</div><div class="t" style="left:200px;top:185px;font-size:10px;letter-spacing:-0.4px">7 Jan 16:40</div><div class="t" style="left:264px;top:185px;font-size:10px;letter-spacing:-0.4px">7 Jan 16:48</div><div class="t" style="left:328px;top:185px;font-size:10px;letter-spacing:-0.4px">7 Jan 16:56</div><div class="t" style="left:392px;top:185px;font-size:10px;letter-spacing:-0.4px">7 Jan 17:04</div><div class="t" style="left:456px;top:185px;font-size:10px;letter-spacing:-0.4px">7 Jan 17:12</div><div class="t" style="left:520px;top:185px;font-size:10px;letter-spacing:-0.4px">7 Jan 17:20</div><div class="t" style="left:584px;top:185px;font-size:10px;letter-spacing:-0.4px">7 Jan 17:28</div><div class="t" style="left:648px;top:185px;font-size:10px;letter-spacing:-0.4px">7 Jan 17:36</div><div class="t" style="left:712px;top:185px;font-size:10px;letter-spacing:-0.4px">7 Jan 17:44</div><div class="t" style="left:776px;top:185px;font-size:10px;letter-spacing:-0.4px">7 Jan 17:52</div><div class="t" style="left:840px;top:185px;font-size:10px;letter-spacing:-0.4px">7 Jan 18:00</div><div class="t" style="left:904px;top:185px;font-size:10px;letter-spacing:-0.4px">7 Jan 18:08</div><div class="t" style="left:968px;top:185px;font-size:10px;letter-spacing:-0.4px">7 Jan 18:16</div><div class="t" style="left:1240px;top:107px;font-size:10px;letter-spacing:-0.3px;color:#000">1.3710</div><div class="t" style="left:1236px;top:111px;width:36px;height:11px;background:#000;color:#fff;font-size:10px;line-height:11px;letter-spacing:-0.3px;padding-left:3px">1.3703</div><div class="t" style="left:1240px;top:140px;font-size:10px;letter-spacing:-0.3px">1.3605</div><div class="a" style="left:83px;top:107px;width:1px;height:78px;background:#000"></div><div class="t" style="left:43px;top:185px;width:80px;height:11px;background:#000;color:#fff;font-size:10px;line-height:11px;letter-spacing:-0.3px;padding-left:3px">2009.01.07 16:25</div><div class="a" style="left:4px;top:202px;width:1272px;height:19px;background:#ECE9D8;border-left:1px solid #ACA899"></div><div class="a" style="left:4px;top:221px;width:1272px;height:1px;background:#fff"></div><div class="t" style="left:18px;top:204px;color:#6E6E80"><span class="c">G</span><span class="c">O</span><span class="c">L</span><span class="c">D</span>,<span class="c">D</span>aily</div><div class="t" style="left:93px;top:204px;color:#6E6E80"><span class="c">G</span><span class="c">B</span><span class="c">P</span><span class="c">J</span><span class="c">P</span><span class="c">Y</span>,<span class="c">M</span>1</div><div class="t" style="left:169px;top:204px;color:#6E6E80"><span class="c">E</span><span class="c">U</span><span class="c">R</span><span class="c">U</span><span class="c">S</span><span class="c">D</span>,<span class="c">M</span>1</div><div class="t" style="left:329px;top:204px;color:#6E6E80"><span class="c">E</span><span class="c">U</span><span class="c">R</span><span class="c">U</span><span class="c">S</span><span class="c">D</span>,<span class="c">H</span>1</div><div class="a" style="left:84px;top:204px;width:1px;height:13px;background:#808080"></div><div class="a" style="left:160px;top:204px;width:1px;height:13px;background:#808080"></div><div class="a" style="left:400px;top:204px;width:1px;height:13px;background:#808080"></div><div class="a" style="left:240px;top:201px;width:80px;height:19px;background:#fff;border:solid #000;border-width:0 2px 2px 2px"></div><div class="t" style="left:250px;top:204px;"><span class="c">E</span><span class="c">U</span><span class="c">R</span><span class="c">U</span><span class="c">S</span><span class="c">D</span>,<span class="c">M</span>1</div><svg class="a" style="left:1246px;top:207px" width="30" height="10"><path d="M5 0.5 L1.8 3.7 L5 6.9 Z M19 0.5 L22.2 3.7 L19 6.9 Z" fill="#A8A490"/></svg><div class="a" style="left:5px;top:239px;width:13px;height:503px;background:linear-gradient(#9CB8EA,#7896DE)"></div><div class="t" style="left:-9px;top:712px;width:42px;height:12px;transform:rotate(-90deg);color:#E0F4FF;font-size:11px;line-height:12px">Terminal</div><svg class="a" style="left:7px;top:227px" width="8" height="7"><path d="M1.5 1.5 L6.5 5.8 M6.5 1.5 L1.5 5.8" stroke="#000" stroke-width="1.6"/></svg><div class="a" style="left:19px;top:225px;width:1254px;height:497px;background:#fff;border-left:1px solid #ACA899;border-top:1px solid #ACA899"></div><div class="a" style="left:20px;top:226px;width:1235px;height:20px;background:linear-gradient(to bottom,#EBEADB 0,#EBEADB 17px,#E2DECD 17px,#D6D2C2 18px,#CBC7B8 19px)"></div><div class="t" style="left:32px;top:230px;">Orden</div><svg class="a" style="left:74px;top:232px" width="8" height="8"><path d="M0.5 7.5 L4 1 L7.5 7.5 Z" fill="none" stroke="#fff"/><path d="M0.5 7.5 L4 1" stroke="#ACA899"/></svg><div class="t" style="right:972px;top:230px;letter-spacing:-0.3px">Tiempo</div><div class="t" style="right:888px;top:230px;letter-spacing:-0.3px">Tipo</div><div class="t" style="right:821px;top:230px;letter-spacing:-0.3px">Volumen</div><div class="t" style="right:737px;top:230px;letter-spacing:-0.3px">Simbolo</div><div class="t" style="right:653px;top:230px;letter-spacing:-0.3px">Precio</div><div class="t" style="right:569px;top:230px;letter-spacing:-0.3px">S / L</div><div class="t" style="right:485px;top:230px;letter-spacing:-0.3px">T / P</div><div class="t" style="right:299px;top:230px;letter-spacing:-0.3px">Tiempo</div><div class="t" style="right:215px;top:230px;letter-spacing:-0.3px">Precio</div><div class="t" style="right:131px;top:230px;letter-spacing:-0.3px">Swap</div><div class="t" style="right:31px;top:230px;letter-spacing:-0.3px">Beneficios</div><div class="a" style="left:127px;top:229px;width:1px;height:14px;background:#D6D2C2"></div><div class="a" style="left:128px;top:229px;width:1px;height:14px;background:#fff"></div><div class="a" style="left:313px;top:229px;width:1px;height:14px;background:#D6D2C2"></div><div class="a" style="left:314px;top:229px;width:1px;height:14px;background:#fff"></div><div class="a" style="left:397px;top:229px;width:1px;height:14px;background:#D6D2C2"></div><div class="a" style="left:398px;top:229px;width:1px;height:14px;background:#fff"></div><div class="a" style="left:464px;top:229px;width:1px;height:14px;background:#D6D2C2"></div><div class="a" style="left:465px;top:229px;width:1px;height:14px;background:#fff"></div><div class="a" style="left:548px;top:229px;width:1px;height:14px;background:#D6D2C2"></div><div class="a" style="left:549px;top:229px;width:1px;height:14px;background:#fff"></div><div class="a" style="left:632px;top:229px;width:1px;height:14px;background:#D6D2C2"></div><div class="a" style="left:633px;top:229px;width:1px;height:14px;background:#fff"></div><div class="a" style="left:716px;top:229px;width:1px;height:14px;background:#D6D2C2"></div><div class="a" style="left:717px;top:229px;width:1px;height:14px;background:#fff"></div><div class="a" style="left:800px;top:229px;width:1px;height:14px;background:#D6D2C2"></div><div class="a" style="left:801px;top:229px;width:1px;height:14px;background:#fff"></div><div class="a" style="left:986px;top:229px;width:1px;height:14px;background:#D6D2C2"></div><div class="a" style="left:987px;top:229px;width:1px;height:14px;background:#fff"></div><div class="a" style="left:1070px;top:229px;width:1px;height:14px;background:#D6D2C2"></div><div class="a" style="left:1071px;top:229px;width:1px;height:14px;background:#fff"></div><div class="a" style="left:1154px;top:229px;width:1px;height:14px;background:#D6D2C2"></div><div class="a" style="left:1155px;top:229px;width:1px;height:14px;background:#fff"></div><div class="a" style="left:1254px;top:229px;width:1px;height:14px;background:#D6D2C2"></div><div class="a" style="left:1255px;top:229px;width:1px;height:14px;background:#fff"></div><svg width="0" height="0" class="a"><defs><radialGradient id="gb" cx="0.35" cy="0.3" r="0.8"><stop offset="0" stop-color="#BFE0FF"/><stop offset="0.5" stop-color="#2F80E8"/><stop offset="1" stop-color="#1050B0"/></radialGradient><radialGradient id="go" cx="0.35" cy="0.3" r="0.8"><stop offset="0" stop-color="#FFD8A0"/><stop offset="0.5" stop-color="#E07A20"/><stop offset="1" stop-color="#A04A00"/></radialGradient><linearGradient id="pg" x1="0" y1="0" x2="1" y2="1"><stop offset="0" stop-color="#fff"/><stop offset="1" stop-color="#D8D8D8"/></linearGradient></defs></svg><div class="a" style="left:20px;top:246px;width:1235px;height:20px;background:#EAEAEA"></div><div class="t" style="left:45px;top:250px;">11228071</div><div class="t" style="right:969px;top:250px;">2009.01.07 13:00</div><div class="t" style="right:885px;top:250px;">buy</div><div class="t" style="right:818px;top:250px;">2.00</div><div class="t" style="right:734px;top:250px;">eurusd</div><div class="t" style="right:650px;top:250px;">1.3624</div><div class="t" style="right:566px;top:250px;">0.0000</div><div class="t" style="right:482px;top:250px;">0.0000</div><div class="t" style="right:296px;top:250px;">2009.01.07 13:08</div><div class="t" style="right:212px;top:250px;">1.3616</div><div class="t" style="right:128px;top:250px;">0.00</div><div class="t" style="right:28px;top:250px;">-117.51</div><svg class="a" style="left:22px;top:249px" width="17" height="16"><path d="M1.5 0.5 H9.5 L12.5 3.5 V13.5 H1.5 Z" fill="url(#pg)" stroke="#5A5A5A"/><path d="M9.5 1 V3.5 H12" fill="#fff" stroke="#5A5A5A"/><circle cx="12" cy="11.5" r="3.2" fill="url(#gb)" stroke="#1A4AA0" stroke-width="0.7"/></svg><div class="a" style="left:20px;top:266px;width:1235px;height:20px;background:#FFFFFF"></div><div class="a" style="left:20px;top:266px;width:1235px;height:1px;background:#D0D0D0"></div><div class="t" style="left:45px;top:270px;">11228456</div><div class="t" style="right:969px;top:270px;">2009.01.07 13:10</div><div class="t" style="right:885px;top:270px;">sell</div><div class="t" style="right:818px;top:270px;">2.00</div><div class="t" style="right:734px;top:270px;">eurusd</div><div class="t" style="right:650px;top:270px;">1.3616</div><div class="t" style="right:566px;top:270px;">0.0000</div><div class="t" style="right:482px;top:270px;">0.0000</div><div class="t" style="right:296px;top:270px;">2009.01.07 13:13</div><div class="t" style="right:212px;top:270px;">1.3616</div><div class="t" style="right:128px;top:270px;">0.00</div><div class="t" style="right:28px;top:270px;">0.00</div><svg class="a" style="left:22px;top:269px" width="17" height="16"><path d="M1.5 0.5 H9.5 L12.5 3.5 V13.5 H1.5 Z" fill="url(#pg)" stroke="#5A5A5A"/><path d="M9.5 1 V3.5 H12" fill="#fff" stroke="#5A5A5A"/><circle cx="12" cy="11.5" r="3.2" fill="url(#go)" stroke="#902800" stroke-width="0.7"/></svg><div class="a" style="left:20px;top:286px;width:1235px;height:20px;background:#EAEAEA"></div><div class="a" style="left:20px;top:286px;width:1235px;height:1px;background:#D0D0D0"></div><div class="t" style="left:45px;top:290px;">11228611</div><div class="t" style="right:969px;top:290px;">2009.01.07 13:16</div><div class="t" style="right:885px;top:290px;">sell</div><div class="t" style="right:818px;top:290px;">2.00</div><div class="t" style="right:734px;top:290px;">eurusd</div><div class="t" style="right:650px;top:290px;">1.3614</div><div class="t" style="right:566px;top:290px;">0.0000</div><div class="t" style="right:482px;top:290px;">0.0000</div><div class="t" style="right:296px;top:290px;">2009.01.07 13:20</div><div class="t" style="right:212px;top:290px;">1.3621</div><div class="t" style="right:128px;top:290px;">0.00</div><div class="t" style="right:28px;top:290px;">-102.78</div><svg class="a" style="left:22px;top:289px" width="17" height="16"><path d="M1.5 0.5 H9.5 L12.5 3.5 V13.5 H1.5 Z" fill="url(#pg)" stroke="#5A5A5A"/><path d="M9.5 1 V3.5 H12" fill="#fff" stroke="#5A5A5A"/><circle cx="12" cy="11.5" r="3.2" fill="url(#go)" stroke="#902800" stroke-width="0.7"/></svg><div class="a" style="left:20px;top:306px;width:1235px;height:20px;background:#FFFFFF"></div><div class="a" style="left:20px;top:306px;width:1235px;height:1px;background:#D0D0D0"></div><div class="t" style="left:45px;top:310px;">11228703</div><div class="t" style="right:969px;top:310px;">2009.01.07 13:20</div><div class="t" style="right:885px;top:310px;">buy</div><div class="t" style="right:818px;top:310px;">2.00</div><div class="t" style="right:734px;top:310px;">eurusd</div><div class="t" style="right:650px;top:310px;">1.3623</div><div class="t" style="right:566px;top:310px;">0.0000</div><div class="t" style="right:482px;top:310px;">0.0000</div><div class="t" style="right:296px;top:310px;">2009.01.07 13:22</div><div class="t" style="right:212px;top:310px;">1.3605</div><div class="t" style="right:128px;top:310px;">0.00</div><div class="t" style="right:28px;top:310px;">-264.61</div><svg class="a" style="left:22px;top:309px" width="17" height="16"><path d="M1.5 0.5 H9.5 L12.5 3.5 V13.5 H1.5 Z" fill="url(#pg)" stroke="#5A5A5A"/><path d="M9.5 1 V3.5 H12" fill="#fff" stroke="#5A5A5A"/><circle cx="12" cy="11.5" r="3.2" fill="url(#gb)" stroke="#1A4AA0" stroke-width="0.7"/></svg><div class="a" style="left:20px;top:326px;width:1235px;height:20px;background:#EAEAEA"></div><div class="a" style="left:20px;top:326px;width:1235px;height:1px;background:#D0D0D0"></div><div class="t" style="left:45px;top:330px;">11228829</div><div class="t" style="right:969px;top:330px;">2009.01.07 13:23</div><div class="t" style="right:885px;top:330px;">sell</div><div class="t" style="right:818px;top:330px;">2.00</div><div class="t" style="right:734px;top:330px;">eurusd</div><div class="t" style="right:650px;top:330px;">1.3604</div><div class="t" style="right:566px;top:330px;">0.0000</div><div class="t" style="right:482px;top:330px;">0.0000</div><div class="t" style="right:296px;top:330px;">2009.01.07 13:24</div><div class="t" style="right:212px;top:330px;">1.3604</div><div class="t" style="right:128px;top:330px;">0.00</div><div class="t" style="right:28px;top:330px;">0.00</div><svg class="a" style="left:22px;top:329px" width="17" height="16"><path d="M1.5 0.5 H9.5 L12.5 3.5 V13.5 H1.5 Z" fill="url(#pg)" stroke="#5A5A5A"/><path d="M9.5 1 V3.5 H12" fill="#fff" stroke="#5A5A5A"/><circle cx="12" cy="11.5" r="3.2" fill="url(#go)" stroke="#902800" stroke-width="0.7"/></svg><div class="a" style="left:20px;top:346px;width:1235px;height:20px;background:#FFFFFF"></div><div class="a" style="left:20px;top:346px;width:1235px;height:1px;background:#D0D0D0"></div><div class="t" style="left:45px;top:350px;">11229041</div><div class="t" style="right:969px;top:350px;">2009.01.07 13:26</div><div class="t" style="right:885px;top:350px;">buy</div><div class="t" style="right:818px;top:350px;">3.00</div><div class="t" style="right:734px;top:350px;">eurusd</div><div class="t" style="right:650px;top:350px;">1.3606</div><div class="t" style="right:566px;top:350px;">0.0000</div><div class="t" style="right:482px;top:350px;">0.0000</div><div class="t" style="right:296px;top:350px;">2009.01.07 13:29</div><div class="t" style="right:212px;top:350px;">1.3611</div><div class="t" style="right:128px;top:350px;">0.00</div><div class="t" style="right:28px;top:350px;">110.20</div><svg class="a" style="left:22px;top:349px" width="17" height="16"><path d="M1.5 0.5 H9.5 L12.5 3.5 V13.5 H1.5 Z" fill="url(#pg)" stroke="#5A5A5A"/><path d="M9.5 1 V3.5 H12" fill="#fff" stroke="#5A5A5A"/><circle cx="12" cy="11.5" r="3.2" fill="url(#gb)" stroke="#1A4AA0" stroke-width="0.7"/></svg><div class="a" style="left:20px;top:366px;width:1235px;height:20px;background:#EAEAEA"></div><div class="a" style="left:20px;top:366px;width:1235px;height:1px;background:#D0D0D0"></div><div class="t" style="left:45px;top:370px;">11229244</div><div class="t" style="right:969px;top:370px;">2009.01.07 13:31</div><div class="t" style="right:885px;top:370px;">sell</div><div class="t" style="right:818px;top:370px;">3.00</div><div class="t" style="right:734px;top:370px;">eurusd</div><div class="t" style="right:650px;top:370px;">1.3608</div><div class="t" style="right:566px;top:370px;">0.0000</div><div class="t" style="right:482px;top:370px;">0.0000</div><div class="t" style="right:296px;top:370px;">2009.01.07 13:31</div><div class="t" style="right:212px;top:370px;">1.3608</div><div class="t" style="right:128px;top:370px;">0.00</div><div class="t" style="right:28px;top:370px;">0.00</div><svg class="a" style="left:22px;top:369px" width="17" height="16"><path d="M1.5 0.5 H9.5 L12.5 3.5 V13.5 H1.5 Z" fill="url(#pg)" stroke="#5A5A5A"/><path d="M9.5 1 V3.5 H12" fill="#fff" stroke="#5A5A5A"/><circle cx="12" cy="11.5" r="3.2" fill="url(#go)" stroke="#902800" stroke-width="0.7"/></svg><div class="a" style="left:20px;top:386px;width:1235px;height:20px;background:#FFFFFF"></div><div class="a" style="left:20px;top:386px;width:1235px;height:1px;background:#D0D0D0"></div><div class="t" style="left:45px;top:390px;">11229293</div><div class="t" style="right:969px;top:390px;">2009.01.07 13:33</div><div class="t" style="right:885px;top:390px;">buy</div><div class="t" style="right:818px;top:390px;">3.00</div><div class="t" style="right:734px;top:390px;">eurusd</div><div class="t" style="right:650px;top:390px;">1.3611</div><div class="t" style="right:566px;top:390px;">1.3600</div><div class="t" style="right:482px;top:390px;">0.0000</div><div class="t" style="right:296px;top:390px;">2009.01.07 13:41</div><div class="t" style="right:212px;top:390px;">1.3609</div><div class="t" style="right:128px;top:390px;">0.00</div><div class="t" style="right:28px;top:390px;">-44.09</div><svg class="a" style="left:22px;top:389px" width="17" height="16"><path d="M1.5 0.5 H9.5 L12.5 3.5 V13.5 H1.5 Z" fill="url(#pg)" stroke="#5A5A5A"/><path d="M9.5 1 V3.5 H12" fill="#fff" stroke="#5A5A5A"/><circle cx="12" cy="11.5" r="3.2" fill="url(#gb)" stroke="#1A4AA0" stroke-width="0.7"/></svg><div class="a" style="left:20px;top:406px;width:1235px;height:20px;background:#EAEAEA"></div><div class="a" style="left:20px;top:406px;width:1235px;height:1px;background:#D0D0D0"></div><div class="t" style="left:45px;top:410px;">11230929</div><div class="t" style="right:969px;top:410px;">2009.01.07 14:14</div><div class="t" style="right:885px;top:410px;">buy</div><div class="t" style="right:818px;top:410px;">3.00</div><div class="t" style="right:734px;top:410px;">eurusd</div><div class="t" style="right:650px;top:410px;">1.3601</div><div class="t" style="right:566px;top:410px;">0.0000</div><div class="t" style="right:482px;top:410px;">0.0000</div><div class="t" style="right:296px;top:410px;">2009.01.07 14:15</div><div class="t" style="right:212px;top:410px;">1.3618</div><div class="t" style="right:128px;top:410px;">0.00</div><div class="t" style="right:28px;top:410px;">374.50</div><svg class="a" style="left:22px;top:409px" width="17" height="16"><path d="M1.5 0.5 H9.5 L12.5 3.5 V13.5 H1.5 Z" fill="url(#pg)" stroke="#5A5A5A"/><path d="M9.5 1 V3.5 H12" fill="#fff" stroke="#5A5A5A"/><circle cx="12" cy="11.5" r="3.2" fill="url(#gb)" stroke="#1A4AA0" stroke-width="0.7"/></svg><div class="a" style="left:20px;top:426px;width:1235px;height:20px;background:#FFFFFF"></div><div class="a" style="left:20px;top:426px;width:1235px;height:1px;background:#D0D0D0"></div><div class="t" style="left:45px;top:430px;">11231473</div><div class="t" style="right:969px;top:430px;">2009.01.07 14:21</div><div class="t" style="right:885px;top:430px;">buy</div><div class="t" style="right:818px;top:430px;">3.00</div><div class="t" style="right:734px;top:430px;">eurusd</div><div class="t" style="right:650px;top:430px;">1.3627</div><div class="t" style="right:566px;top:430px;">0.0000</div><div class="t" style="right:482px;top:430px;">0.0000</div><div class="t" style="right:296px;top:430px;">2009.01.07 14:25</div><div class="t" style="right:212px;top:430px;">1.3627</div><div class="t" style="right:128px;top:430px;">0.00</div><div class="t" style="right:28px;top:430px;">0.00</div><svg class="a" style="left:22px;top:429px" width="17" height="16"><path d="M1.5 0.5 H9.5 L12.5 3.5 V13.5 H1.5 Z" fill="url(#pg)" stroke="#5A5A5A"/><path d="M9.5 1 V3.5 H12" fill="#fff" stroke="#5A5A5A"/><circle cx="12" cy="11.5" r="3.2" fill="url(#gb)" stroke="#1A4AA0" stroke-width="0.7"/></svg><div class="a" style="left:20px;top:446px;width:1235px;height:20px;background:#EAEAEA"></div><div class="a" style="left:20px;top:446px;width:1235px;height:1px;background:#D0D0D0"></div><div class="t" style="left:45px;top:450px;">11232608</div><div class="t" style="right:969px;top:450px;">2009.01.07 14:34</div><div class="t" style="right:885px;top:450px;">buy</div><div class="t" style="right:818px;top:450px;">3.00</div><div class="t" style="right:734px;top:450px;">eurusd</div><div class="t" style="right:650px;top:450px;">1.3704</div><div class="t" style="right:566px;top:450px;">0.0000</div><div class="t" style="right:482px;top:450px;">0.0000</div><div class="t" style="right:296px;top:450px;">2009.01.07 14:36</div><div class="t" style="right:212px;top:450px;">1.3709</div><div class="t" style="right:128px;top:450px;">0.00</div><div class="t" style="right:28px;top:450px;">109.42</div><svg class="a" style="left:22px;top:449px" width="17" height="16"><path d="M1.5 0.5 H9.5 L12.5 3.5 V13.5 H1.5 Z" fill="url(#pg)" stroke="#5A5A5A"/><path d="M9.5 1 V3.5 H12" fill="#fff" stroke="#5A5A5A"/><circle cx="12" cy="11.5" r="3.2" fill="url(#gb)" stroke="#1A4AA0" stroke-width="0.7"/></svg><div class="a" style="left:20px;top:466px;width:1235px;height:20px;background:#FFFFFF"></div><div class="a" style="left:20px;top:466px;width:1235px;height:1px;background:#D0D0D0"></div><div class="t" style="left:45px;top:470px;">11233650</div><div class="t" style="right:969px;top:470px;">2009.01.07 14:46</div><div class="t" style="right:885px;top:470px;">buy</div><div class="t" style="right:818px;top:470px;">3.00</div><div class="t" style="right:734px;top:470px;">eurusd</div><div class="t" style="right:650px;top:470px;">1.3721</div><div class="t" style="right:566px;top:470px;">1.3700</div><div class="t" style="right:482px;top:470px;">1.3735</div><div class="t" style="right:296px;top:470px;">2009.01.07 14:51</div><div class="t" style="right:212px;top:470px;">1.3731</div><div class="t" style="right:128px;top:470px;">0.00</div><div class="t" style="right:28px;top:470px;">218.48</div><svg class="a" style="left:22px;top:469px" width="17" height="16"><path d="M1.5 0.5 H9.5 L12.5 3.5 V13.5 H1.5 Z" fill="url(#pg)" stroke="#5A5A5A"/><path d="M9.5 1 V3.5 H12" fill="#fff" stroke="#5A5A5A"/><circle cx="12" cy="11.5" r="3.2" fill="url(#gb)" stroke="#1A4AA0" stroke-width="0.7"/></svg><div class="a" style="left:20px;top:486px;width:1235px;height:20px;background:#EAEAEA"></div><div class="a" style="left:20px;top:486px;width:1235px;height:1px;background:#D0D0D0"></div><div class="t" style="left:45px;top:490px;">11239908</div><div class="t" style="right:969px;top:490px;">2009.01.07 16:31</div><div class="t" style="right:885px;top:490px;">buy</div><div class="t" style="right:818px;top:490px;">1.00</div><div class="t" style="right:734px;top:490px;">eurusd</div><div class="t" style="right:650px;top:490px;">1.3635</div><div class="t" style="right:566px;top:490px;">0.0000</div><div class="t" style="right:482px;top:490px;">0.0000</div><div class="t" style="right:296px;top:490px;">2009.01.07 16:32</div><div class="t" style="right:212px;top:490px;">1.3628</div><div class="t" style="right:128px;top:490px;">0.00</div><div class="t" style="right:28px;top:490px;">-51.36</div><svg class="a" style="left:22px;top:489px" width="17" height="16"><path d="M1.5 0.5 H9.5 L12.5 3.5 V13.5 H1.5 Z" fill="url(#pg)" stroke="#5A5A5A"/><path d="M9.5 1 V3.5 H12" fill="#fff" stroke="#5A5A5A"/><circle cx="12" cy="11.5" r="3.2" fill="url(#gb)" stroke="#1A4AA0" stroke-width="0.7"/></svg><div class="a" style="left:20px;top:506px;width:1235px;height:20px;background:#FFFFFF"></div><div class="a" style="left:20px;top:506px;width:1235px;height:1px;background:#D0D0D0"></div><div class="t" style="left:45px;top:510px;">11240029</div><div class="t" style="right:969px;top:510px;">2009.01.07 16:33</div><div class="t" style="right:885px;top:510px;">buy</div><div class="t" style="right:818px;top:510px;">1.00</div><div class="t" style="right:734px;top:510px;">eurusd</div><div class="t" style="right:650px;top:510px;">1.3639</div><div class="t" style="right:566px;top:510px;">0.0000</div><div class="t" style="right:482px;top:510px;">0.0000</div><div class="t" style="right:296px;top:510px;">2009.01.07 16:34</div><div class="t" style="right:212px;top:510px;">1.3645</div><div class="t" style="right:128px;top:510px;">0.00</div><div class="t" style="right:28px;top:510px;">43.97</div><svg class="a" style="left:22px;top:509px" width="17" height="16"><path d="M1.5 0.5 H9.5 L12.5 3.5 V13.5 H1.5 Z" fill="url(#pg)" stroke="#5A5A5A"/><path d="M9.5 1 V3.5 H12" fill="#fff" stroke="#5A5A5A"/><circle cx="12" cy="11.5" r="3.2" fill="url(#gb)" stroke="#1A4AA0" stroke-width="0.7"/></svg><div class="a" style="left:20px;top:526px;width:1235px;height:20px;background:#EAEAEA"></div><div class="a" style="left:20px;top:526px;width:1235px;height:1px;background:#D0D0D0"></div><div class="a" style="left:634px;top:527px;width:81px;height:18px;background:#FFA0A0"></div><div class="t" style="left:45px;top:530px;">11240676</div><div class="t" style="right:969px;top:530px;">2009.01.07 16:43</div><div class="t" style="right:885px;top:530px;">buy</div><div class="t" style="right:818px;top:530px;">1.00</div><div class="t" style="right:734px;top:530px;">eurusd</div><div class="t" style="right:650px;top:530px;">1.3647</div><div class="t" style="right:566px;top:530px;">1.3633</div><div class="t" style="right:482px;top:530px;">0.0000</div><div class="t" style="right:296px;top:530px;">2009.01.07 16:44</div><div class="t" style="right:212px;top:530px;">1.3633</div><div class="t" style="right:128px;top:530px;">0.00</div><div class="t" style="right:28px;top:530px;">-102.69</div><svg class="a" style="left:22px;top:529px" width="17" height="16"><path d="M1.5 0.5 H9.5 L12.5 3.5 V13.5 H1.5 Z" fill="url(#pg)" stroke="#5A5A5A"/><path d="M9.5 1 V3.5 H12" fill="#fff" stroke="#5A5A5A"/><circle cx="12" cy="11.5" r="3.2" fill="url(#gb)" stroke="#1A4AA0" stroke-width="0.7"/></svg><div class="a" style="left:20px;top:546px;width:1235px;height:20px;background:#FFFFFF"></div><div class="a" style="left:20px;top:546px;width:1235px;height:1px;background:#D0D0D0"></div><div class="t" style="left:45px;top:550px;">11240905</div><div class="t" style="right:969px;top:550px;">2009.01.07 16:46</div><div class="t" style="right:885px;top:550px;">sell</div><div class="t" style="right:818px;top:550px;">2.00</div><div class="t" style="right:734px;top:550px;">eurusd</div><div class="t" style="right:650px;top:550px;">1.3622</div><div class="t" style="right:566px;top:550px;">0.0000</div><div class="t" style="right:482px;top:550px;">0.0000</div><div class="t" style="right:296px;top:550px;">2009.01.07 16:46</div><div class="t" style="right:212px;top:550px;">1.3620</div><div class="t" style="right:128px;top:550px;">0.00</div><div class="t" style="right:28px;top:550px;">29.37</div><svg class="a" style="left:22px;top:549px" width="17" height="16"><path d="M1.5 0.5 H9.5 L12.5 3.5 V13.5 H1.5 Z" fill="url(#pg)" stroke="#5A5A5A"/><path d="M9.5 1 V3.5 H12" fill="#fff" stroke="#5A5A5A"/><circle cx="12" cy="11.5" r="3.2" fill="url(#go)" stroke="#902800" stroke-width="0.7"/></svg><div class="a" style="left:20px;top:566px;width:1235px;height:20px;background:#EAEAEA"></div><div class="a" style="left:20px;top:566px;width:1235px;height:1px;background:#D0D0D0"></div><div class="t" style="left:45px;top:570px;">11241101</div><div class="t" style="right:969px;top:570px;">2009.01.07 16:49</div><div class="t" style="right:885px;top:570px;">sell</div><div class="t" style="right:818px;top:570px;">2.00</div><div class="t" style="right:734px;top:570px;">eurusd</div><div class="t" style="right:650px;top:570px;">1.3613</div><div class="t" style="right:566px;top:570px;">0.0000</div><div class="t" style="right:482px;top:570px;">0.0000</div><div class="t" style="right:296px;top:570px;">2009.01.07 16:49</div><div class="t" style="right:212px;top:570px;">1.3612</div><div class="t" style="right:128px;top:570px;">0.00</div><div class="t" style="right:28px;top:570px;">14.69</div><svg class="a" style="left:22px;top:569px" width="17" height="16"><path d="M1.5 0.5 H9.5 L12.5 3.5 V13.5 H1.5 Z" fill="url(#pg)" stroke="#5A5A5A"/><path d="M9.5 1 V3.5 H12" fill="#fff" stroke="#5A5A5A"/><circle cx="12" cy="11.5" r="3.2" fill="url(#go)" stroke="#902800" stroke-width="0.7"/></svg><div class="a" style="left:20px;top:586px;width:1235px;height:20px;background:#FFFFFF"></div><div class="a" style="left:20px;top:586px;width:1235px;height:1px;background:#D0D0D0"></div><div class="t" style="left:45px;top:590px;">11241243</div><div class="t" style="right:969px;top:590px;">2009.01.07 16:51</div><div class="t" style="right:885px;top:590px;">buy</div><div class="t" style="right:818px;top:590px;">2.00</div><div class="t" style="right:734px;top:590px;">eurusd</div><div class="t" style="right:650px;top:590px;">1.3617</div><div class="t" style="right:566px;top:590px;">0.0000</div><div class="t" style="right:482px;top:590px;">0.0000</div><div class="t" style="right:296px;top:590px;">2009.01.07 16:56</div><div class="t" style="right:212px;top:590px;">1.3617</div><div class="t" style="right:128px;top:590px;">0.00</div><div class="t" style="right:28px;top:590px;">0.00</div><svg class="a" style="left:22px;top:589px" width="17" height="16"><path d="M1.5 0.5 H9.5 L12.5 3.5 V13.5 H1.5 Z" fill="url(#pg)" stroke="#5A5A5A"/><path d="M9.5 1 V3.5 H12" fill="#fff" stroke="#5A5A5A"/><circle cx="12" cy="11.5" r="3.2" fill="url(#gb)" stroke="#1A4AA0" stroke-width="0.7"/></svg><div class="a" style="left:20px;top:606px;width:1235px;height:20px;background:#EAEAEA"></div><div class="a" style="left:20px;top:606px;width:1235px;height:1px;background:#D0D0D0"></div><div class="t" style="left:45px;top:610px;">11242012</div><div class="t" style="right:969px;top:610px;">2009.01.07 17:01</div><div class="t" style="right:885px;top:610px;">buy</div><div class="t" style="right:818px;top:610px;">2.00</div><div class="t" style="right:734px;top:610px;">eurusd</div><div class="t" style="right:650px;top:610px;">1.3653</div><div class="t" style="right:566px;top:610px;">0.0000</div><div class="t" style="right:482px;top:610px;">0.0000</div><div class="t" style="right:296px;top:610px;">2009.01.07 17:02</div><div class="t" style="right:212px;top:610px;">1.3655</div><div class="t" style="right:128px;top:610px;">0.00</div><div class="t" style="right:28px;top:610px;">29.29</div><svg class="a" style="left:22px;top:609px" width="17" height="16"><path d="M1.5 0.5 H9.5 L12.5 3.5 V13.5 H1.5 Z" fill="url(#pg)" stroke="#5A5A5A"/><path d="M9.5 1 V3.5 H12" fill="#fff" stroke="#5A5A5A"/><circle cx="12" cy="11.5" r="3.2" fill="url(#gb)" stroke="#1A4AA0" stroke-width="0.7"/></svg><div class="a" style="left:20px;top:626px;width:1235px;height:20px;background:#FFFFFF"></div><div class="a" style="left:20px;top:626px;width:1235px;height:1px;background:#D0D0D0"></div><div class="t" style="left:45px;top:630px;">11242693</div><div class="t" style="right:969px;top:630px;">2009.01.07 17:09</div><div class="t" style="right:885px;top:630px;">buy</div><div class="t" style="right:818px;top:630px;">2.00</div><div class="t" style="right:734px;top:630px;">eurusd</div><div class="t" style="right:650px;top:630px;">1.3688</div><div class="t" style="right:566px;top:630px;">0.0000</div><div class="t" style="right:482px;top:630px;">0.0000</div><div class="t" style="right:296px;top:630px;">2009.01.07 17:11</div><div class="t" style="right:212px;top:630px;">1.3699</div><div class="t" style="right:128px;top:630px;">0.00</div><div class="t" style="right:28px;top:630px;">160.60</div><svg class="a" style="left:22px;top:629px" width="17" height="16"><path d="M1.5 0.5 H9.5 L12.5 3.5 V13.5 H1.5 Z" fill="url(#pg)" stroke="#5A5A5A"/><path d="M9.5 1 V3.5 H12" fill="#fff" stroke="#5A5A5A"/><circle cx="12" cy="11.5" r="3.2" fill="url(#gb)" stroke="#1A4AA0" stroke-width="0.7"/></svg><div class="a" style="left:20px;top:646px;width:1235px;height:20px;background:#EAEAEA"></div><div class="a" style="left:20px;top:646px;width:1235px;height:1px;background:#D0D0D0"></div><div class="t" style="left:45px;top:650px;">11243578</div><div class="t" style="right:969px;top:650px;">2009.01.07 17:20</div><div class="t" style="right:885px;top:650px;">buy</div><div class="t" style="right:818px;top:650px;">2.00</div><div class="t" style="right:734px;top:650px;">eurusd</div><div class="t" style="right:650px;top:650px;">1.3687</div><div class="t" style="right:566px;top:650px;">0.0000</div><div class="t" style="right:482px;top:650px;">0.0000</div><div class="t" style="right:296px;top:650px;">2009.01.07 17:22</div><div class="t" style="right:212px;top:650px;">1.3692</div><div class="t" style="right:128px;top:650px;">0.00</div><div class="t" style="right:28px;top:650px;">73.04</div><svg class="a" style="left:22px;top:649px" width="17" height="16"><path d="M1.5 0.5 H9.5 L12.5 3.5 V13.5 H1.5 Z" fill="url(#pg)" stroke="#5A5A5A"/><path d="M9.5 1 V3.5 H12" fill="#fff" stroke="#5A5A5A"/><circle cx="12" cy="11.5" r="3.2" fill="url(#gb)" stroke="#1A4AA0" stroke-width="0.7"/></svg><div class="a" style="left:20px;top:666px;width:1235px;height:20px;background:#FFFFFF"></div><div class="a" style="left:20px;top:666px;width:1235px;height:1px;background:#D0D0D0"></div><div class="t" style="left:45px;top:670px;">11244263</div><div class="t" style="right:969px;top:670px;">2009.01.07 17:37</div><div class="t" style="right:885px;top:670px;">buy</div><div class="t" style="right:818px;top:670px;">2.00</div><div class="t" style="right:734px;top:670px;">eurusd</div><div class="t" style="right:650px;top:670px;">1.3677</div><div class="t" style="right:566px;top:670px;">0.0000</div><div class="t" style="right:482px;top:670px;">0.0000</div><div class="t" style="right:296px;top:670px;">2009.01.07 17:38</div><div class="t" style="right:212px;top:670px;">1.3677</div><div class="t" style="right:128px;top:670px;">0.00</div><div class="t" style="right:28px;top:670px;">0.00</div><svg class="a" style="left:22px;top:669px" width="17" height="16"><path d="M1.5 0.5 H9.5 L12.5 3.5 V13.5 H1.5 Z" fill="url(#pg)" stroke="#5A5A5A"/><path d="M9.5 1 V3.5 H12" fill="#fff" stroke="#5A5A5A"/><circle cx="12" cy="11.5" r="3.2" fill="url(#gb)" stroke="#1A4AA0" stroke-width="0.7"/></svg><div class="a" style="left:20px;top:686px;width:1235px;height:20px;background:#EAEAEA"></div><div class="a" style="left:20px;top:686px;width:1235px;height:1px;background:#D0D0D0"></div><div class="t" style="left:45px;top:690px;">11245142</div><div class="t" style="right:969px;top:690px;">2009.01.07 17:59</div><div class="t" style="right:885px;top:690px;">buy</div><div class="t" style="right:818px;top:690px;">1.00</div><div class="t" style="right:734px;top:690px;">eurusd</div><div class="t" style="right:650px;top:690px;">1.3710</div><div class="t" style="right:566px;top:690px;">0.0000</div><div class="t" style="right:482px;top:690px;">0.0000</div><div class="t" style="right:296px;top:690px;">2009.01.07 17:59</div><div class="t" style="right:212px;top:690px;">1.3714</div><div class="t" style="right:128px;top:690px;">0.00</div><div class="t" style="right:28px;top:690px;">29.17</div><svg class="a" style="left:22px;top:689px" width="17" height="16"><path d="M1.5 0.5 H9.5 L12.5 3.5 V13.5 H1.5 Z" fill="url(#pg)" stroke="#5A5A5A"/><path d="M9.5 1 V3.5 H12" fill="#fff" stroke="#5A5A5A"/><circle cx="12" cy="11.5" r="3.2" fill="url(#gb)" stroke="#1A4AA0" stroke-width="0.7"/></svg><div class="a" style="left:127px;top:246px;width:1px;height:460px;background:#D0D0D0"></div><div class="a" style="left:313px;top:246px;width:1px;height:460px;background:#D0D0D0"></div><div class="a" style="left:397px;top:246px;width:1px;height:460px;background:#D0D0D0"></div><div class="a" style="left:464px;top:246px;width:1px;height:460px;background:#D0D0D0"></div><div class="a" style="left:548px;top:246px;width:1px;height:460px;background:#D0D0D0"></div><div class="a" style="left:632px;top:246px;width:1px;height:460px;background:#D0D0D0"></div><div class="a" style="left:716px;top:246px;width:1px;height:460px;background:#D0D0D0"></div><div class="a" style="left:800px;top:246px;width:1px;height:460px;background:#D0D0D0"></div><div class="a" style="left:986px;top:246px;width:1px;height:460px;background:#D0D0D0"></div><div class="a" style="left:1070px;top:246px;width:1px;height:460px;background:#D0D0D0"></div><div class="a" style="left:1154px;top:246px;width:1px;height:460px;background:#D0D0D0"></div><div class="a" style="left:20px;top:706px;width:1235px;height:15px;background:#C4C4C4"></div><div class="a" style="left:19px;top:721px;width:1253px;height:1px;background:#000"></div><svg class="a" style="left:26px;top:712px" width="9" height="9"><circle cx="4.5" cy="4.5" r="3.5" fill="none" stroke="#8A8A8A"/><path d="M2.5 6.5 L6.5 2.5" stroke="#8A8A8A"/></svg><div class="t" style="left:45px;top:710px;font-weight:bold;letter-spacing:0.35px">Beneficios/P‚rdidas: 318.24&nbsp; Cr‚dito: 0.00&nbsp; Dep¢sito: 0.00&nbsp; Retirada: 0.00</div><div class="t" style="right:28px;top:710px;font-weight:bold;letter-spacing:0.6px">318.24</div><div class="a" style="left:1255px;top:226px;width:17px;height:495px;background:#F5F4EF"></div><div class="a" style="left:1256px;top:226px;width:15px;height:17px;background:linear-gradient(135deg,#D8E4FF,#B8CCF8);border-radius:3px;border:1px solid #fff;border-bottom-color:#9AB4E8;border-right-color:#C0D0F0"></div><svg class="a" style="left:1258px;top:229px" width="11" height="10"><path d="M2 7 L5.5 3.5 L9 7" stroke="#3D6A60" stroke-width="2" fill="none"/></svg><div class="a" style="left:1256px;top:488px;width:15px;height:207px;background:linear-gradient(to right,#CAD8FD,#B8CCFA);border-radius:2px;border:1px solid #fff"></div><div class="a" style="left:1260px;top:588px;width:7px;height:1px;background:#EEF2FF"></div><div class="a" style="left:1260px;top:590px;width:7px;height:1px;background:#EEF2FF"></div><div class="a" style="left:1260px;top:592px;width:7px;height:1px;background:#EEF2FF"></div><div class="a" style="left:1260px;top:594px;width:7px;height:1px;background:#EEF2FF"></div><div class="a" style="left:1256px;top:704px;width:15px;height:17px;background:linear-gradient(135deg,#D8E4FF,#B8CCF8);border-radius:3px;border:1px solid #fff;border-bottom-color:#9AB4E8;border-right-color:#C0D0F0"></div><svg class="a" style="left:1258px;top:708px" width="11" height="10"><path d="M2 3 L5.5 6.5 L9 3" stroke="#3D6A60" stroke-width="2" fill="none"/></svg><div class="a" style="left:1272px;top:222px;width:1px;height:520px;background:#fff"></div><div class="a" style="left:19px;top:722px;width:1253px;height:19px;background:#ECE9D8"></div><div class="t" style="left:31px;top:725px;color:#6E6E80"><span class="c">O</span>peraciones</div><div class="t" style="left:225px;top:725px;color:#6E6E80"><span class="c">N</span>oticias</div><div class="t" style="left:283px;top:725px;color:#6E6E80"><span class="c">A</span>visos</div><div class="t" style="left:333px;top:725px;color:#6E6E80"><span class="c">B</span>uz¢n</div><div class="t" style="left:382px;top:725px;color:#6E6E80"><span class="c">E</span>xpertos</div><div class="t" style="left:446px;top:725px;color:#6E6E80"><span class="c">D</span>iario</div><div class="a" style="left:102px;top:721px;width:113px;height:18px;background:#fff;border:solid #000;border-width:0 1px 2px 1px"></div><div class="t" style="left:111px;top:724px;">Historial de cuentas</div><div class="a" style="left:273px;top:726px;width:1px;height:13px;background:#808080"></div><div class="a" style="left:324px;top:726px;width:1px;height:13px;background:#808080"></div><div class="a" style="left:373px;top:726px;width:1px;height:13px;background:#808080"></div><div class="a" style="left:436px;top:726px;width:1px;height:13px;background:#808080"></div><div class="a" style="left:483px;top:726px;width:1px;height:13px;background:#808080"></div><div class="a" style="left:19px;top:741px;width:1253px;height:1px;background:#fff"></div><div class="a" style="left:19px;top:722px;width:1px;height:19px;background:#ACA899"></div><div class="a" style="left:4px;top:744px;width:1272px;height:1px;background:#ACA899"></div><div class="a" style="left:4px;top:745px;width:1272px;height:1px;background:#fff"></div><div class="t" style="left:6px;top:751px;">Para obtener ayuda, pulse F1</div><div class="t" style="left:561px;top:751px;">Default</div><div class="a" style="left:555px;top:749px;width:1px;height:16px;background:#ACA899"></div><div class="a" style="left:556px;top:749px;width:1px;height:16px;background:#fff"></div><div class="a" style="left:664px;top:749px;width:1px;height:16px;background:#ACA899"></div><div class="a" style="left:665px;top:749px;width:1px;height:16px;background:#fff"></div><div class="a" style="left:765px;top:749px;width:1px;height:16px;background:#ACA899"></div><div class="a" style="left:766px;top:749px;width:1px;height:16px;background:#fff"></div><div class="a" style="left:837px;top:749px;width:1px;height:16px;background:#ACA899"></div><div class="a" style="left:838px;top:749px;width:1px;height:16px;background:#fff"></div><div class="a" style="left:908px;top:749px;width:1px;height:16px;background:#ACA899"></div><div class="a" style="left:909px;top:749px;width:1px;height:16px;background:#fff"></div><div class="a" style="left:977px;top:749px;width:1px;height:16px;background:#ACA899"></div><div class="a" style="left:978px;top:749px;width:1px;height:16px;background:#fff"></div><div class="a" style="left:1048px;top:749px;width:1px;height:16px;background:#ACA899"></div><div class="a" style="left:1049px;top:749px;width:1px;height:16px;background:#fff"></div><div class="a" style="left:1114px;top:749px;width:1px;height:16px;background:#ACA899"></div><div class="a" style="left:1115px;top:749px;width:1px;height:16px;background:#fff"></div><svg class="a" style="left:1120px;top:751px" width="24" height="12"><rect x="0" y="0" width="2" height="9" fill="#3E6000"/><rect x="0" y="10" width="2" height="2" fill="#002850"/><rect x="3" y="0" width="2" height="8" fill="#3E6000"/><rect x="3" y="9" width="2" height="3" fill="#002850"/><rect x="6" y="0" width="2" height="7" fill="#3E6000"/><rect x="6" y="8" width="2" height="4" fill="#002850"/><rect x="9" y="0" width="2" height="6" fill="#3E6000"/><rect x="9" y="7" width="2" height="5" fill="#002850"/><rect x="12" y="0" width="2" height="5" fill="#3E6000"/><rect x="12" y="6" width="2" height="6" fill="#002850"/><rect x="15" y="0" width="2" height="4" fill="#3E6000"/><rect x="15" y="5" width="2" height="7" fill="#002850"/><rect x="18" y="0" width="2" height="3" fill="#3E6000"/><rect x="18" y="4" width="2" height="8" fill="#002850"/><rect x="21" y="0" width="2" height="2" fill="#3E6000"/><rect x="21" y="3" width="2" height="9" fill="#002850"/></svg><div class="t" style="left:1170px;top:751px;">337/1 kb</div><svg class="a" style="left:1262px;top:752px" width="14" height="14"><path d="M13 2 L2 13 M13 6 L6 13 M13 10 L10 13" stroke="#fff" stroke-width="1"/><path d="M13 3 L3 13 M13 7 L7 13 M13 11 L11 13" stroke="#ACA899" stroke-width="1"/></svg></body></html>
